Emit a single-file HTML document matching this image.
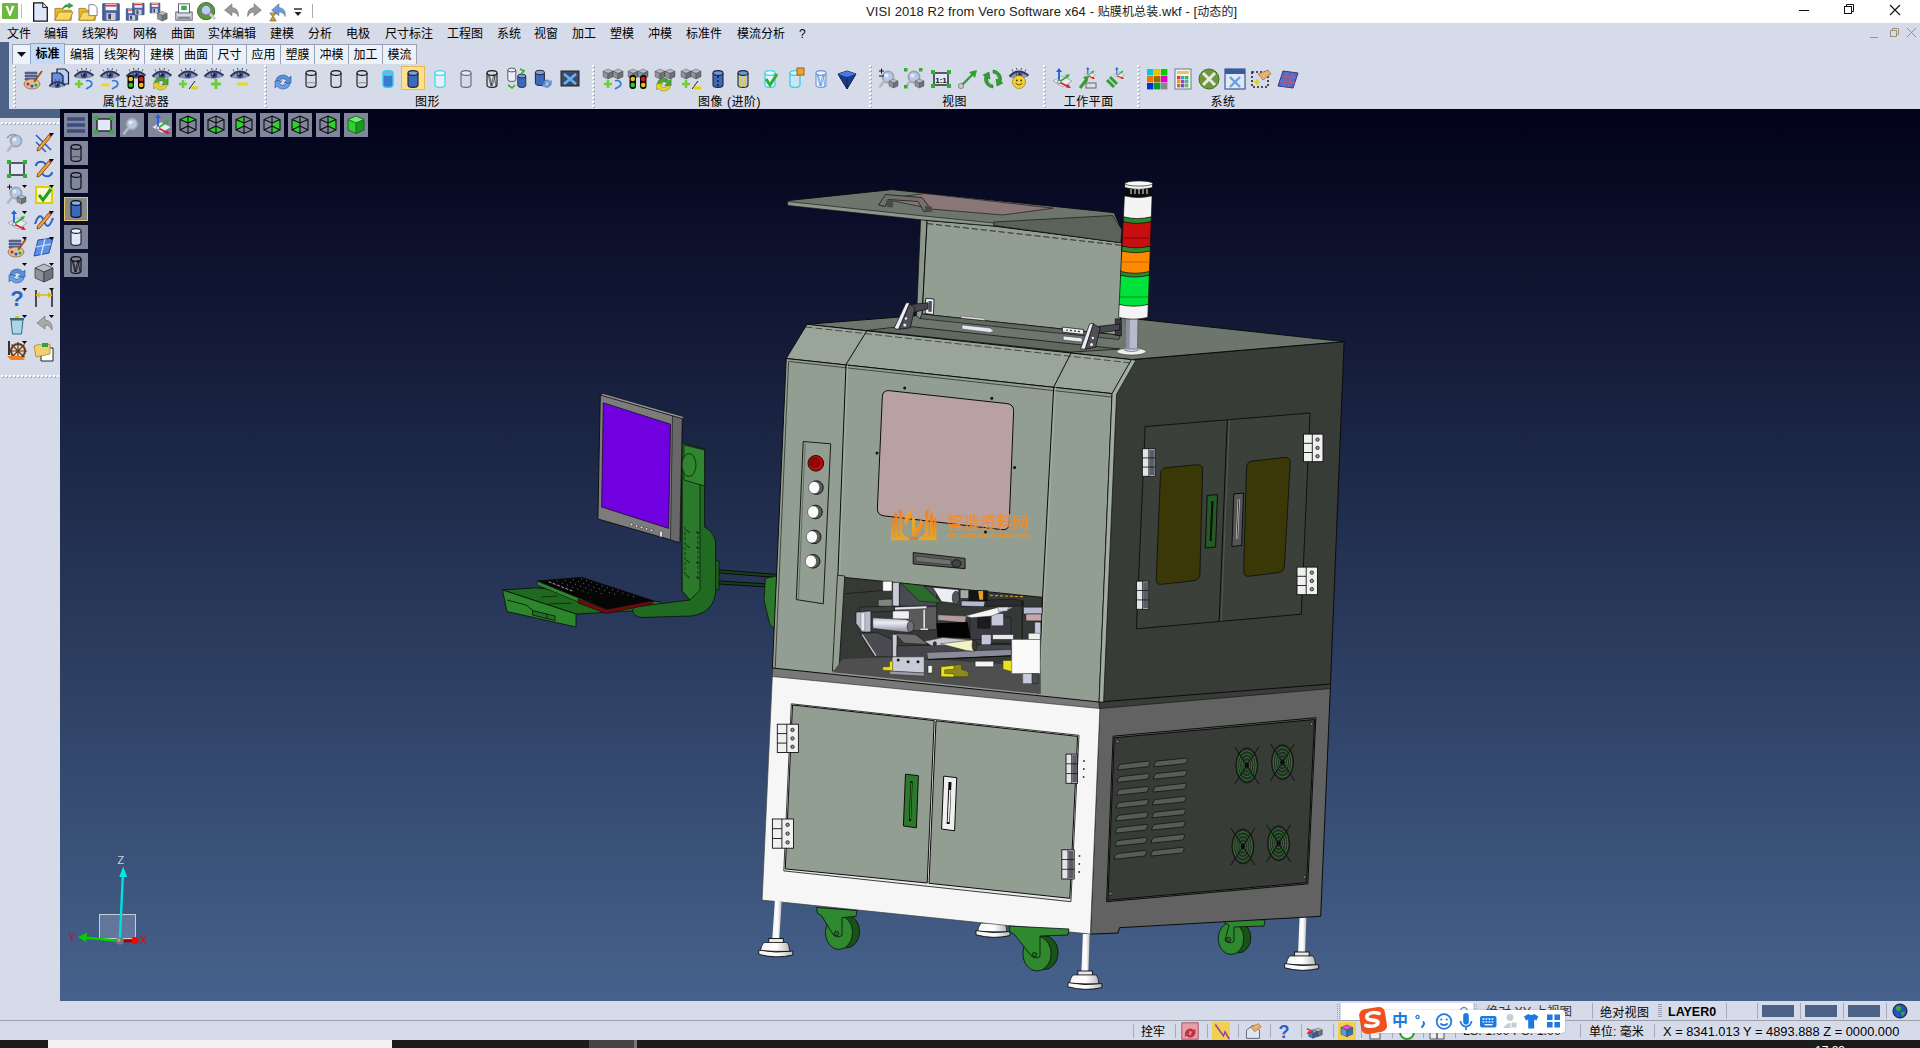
<!DOCTYPE html>
<html><head><meta charset="utf-8"><title>VISI</title>
<style>
*{box-sizing:border-box;margin:0;padding:0}
html,body{width:1920px;height:1048px;overflow:hidden;background:#d6dbe9}
body{position:relative;font-family:"Liberation Sans","Noto Sans CJK SC",sans-serif;font-size:12px;color:#000}
.abs{position:absolute}
svg{position:absolute;overflow:visible}
#title{left:0;top:0;width:1920px;height:23px;background:#fff}
#title .t{position:absolute;left:866px;top:4px;letter-spacing:.09px;font-size:13px;line-height:15px;white-space:nowrap;color:#222}
#title .t i{font-style:normal;font-size:12px}
#menu{left:0;top:23px;width:1920px;height:20px;background:#d6dbe9}
#menu span{position:absolute;top:4px;font-size:12px;white-space:nowrap;line-height:15px}
#blue{left:0;top:42px;width:1920px;height:76px;background:#4c6186}
#tb{left:9px;top:42px;width:1911px;height:67px;background:#d6dbe9}
.tab{position:absolute;top:44px;height:20px;border:1px solid #9aa3b5;border-bottom:none;background:#edf1f9;font-size:12px;line-height:21px;text-align:center;white-space:nowrap}
.tab.sel{top:43px;height:21px;background:#c4daf6;border-color:#8aa8d0;font-weight:bold;line-height:20px}
.grip{position:absolute;top:65px;width:3px;height:43px;background-image:repeating-linear-gradient(#fff 0 2px,transparent 2px 4px),repeating-linear-gradient(transparent 0 1px,#a9b0c2 1px 3px,transparent 3px 4px);background-size:2px 100%,2px 100%;background-position:0 0,1px 0;background-repeat:no-repeat}
.gl{position:absolute;top:95px;letter-spacing:.5px;font-size:12px;white-space:nowrap;transform:translateX(-50%);line-height:15px}
#left{left:0;top:118px;width:60px;height:883px;background:#d6dbe9}
.hgrip{position:absolute;left:1px;width:58px;height:3px;background-image:repeating-linear-gradient(90deg,#fff 0 2px,transparent 2px 4px),repeating-linear-gradient(90deg,transparent 0 1px,#a9b0c2 1px 3px,transparent 3px 4px);background-size:100% 2px,100% 2px;background-position:0 0,0 1px;background-repeat:no-repeat}
#vp{left:60px;top:109px;width:1860px;height:892px;background:linear-gradient(#02021a,#46628c);overflow:hidden}
#status{left:0;top:1001px;width:1920px;height:39px;background:#d6dbe9}
#status span{position:absolute;white-space:nowrap;font-size:12px;line-height:15px}
#task{left:0;top:1040px;width:1920px;height:8px;background:#1c1c1c}
.vb{position:absolute;width:24px;height:24px;background:#80869c}
.ic{position:absolute;width:22px;height:22px}

</style></head><body>
<div id="title" class="abs"><span class="t">VISI 2018 R2 from Vero Software x64 - <i>贴膜机总装</i>.wkf - [<i>动态的</i>]</span><svg style="left:2px;top:3px" width="16" height="16" viewBox="0 0 16 16"><rect width="16" height="16" rx="1" fill="#6cb840"/><path d="M3.500 3l4 10h1l4-10h-2.600l-2 6l-2-6z" fill="#fff"/></svg><div class="abs" style="left:21px;top:4px;width:1px;height:14px;background:#bbb"></div><svg style="left:30.0px;top:2.0px" width="20" height="20" viewBox="0 0 22 22"><path d="M4 1h10l5 5v15h-15z" fill="#dfe8fa" stroke="#111" stroke-width="1.4"/><path d="M14 1v5h5" fill="#dde" stroke="#111" stroke-width="1"/></svg><svg style="left:54.0px;top:2.0px" width="20" height="20" viewBox="0 0 22 22"><path d="M1 7h7l2 2h9v11h-18z" fill="#e8b830" stroke="#8a6a10" stroke-width=".7"/><path d="M1 20l4-9h16l-4 9z" fill="#f8d860" stroke="#8a6a10" stroke-width=".7"/><path d="M9 8q2-6 8-5l-1-2l5 3l-5 3l0-2q-4 0-7 3z" fill="#30b030" stroke="#1a6a1a" stroke-width=".5"/></svg><svg style="left:77.5px;top:2.0px" width="20" height="20" viewBox="0 0 22 22"><path d="M1 7h7l2 2h9v11h-18z" fill="#e8b830" stroke="#8a6a10" stroke-width=".7"/><path d="M1 20l4-9h16l-4 9z" fill="#f8d860" stroke="#8a6a10" stroke-width=".7"/><path d="M12 3h6l3 3v9h-9z" fill="#fff" stroke="#556" stroke-width=".8"/></svg><svg style="left:101.0px;top:2.0px" width="20" height="20" viewBox="0 0 22 22"><g transform="translate(0,0) scale(1)"><path d="M2 2h18v18h-18z" fill="#4a66a8" stroke="#2a3a6a"/><rect x="5" y="2" width="12" height="7" fill="#f0f0f0"/><rect x="5" y="3" width="12" height="2" fill="#e03030"/><rect x="6" y="12" width="10" height="8" fill="#c8ccd4"/><rect x="8" y="13" width="3" height="6" fill="#445"/></g></svg><svg style="left:125.0px;top:2.0px" width="20" height="20" viewBox="0 0 22 22"><g transform="translate(0,6) scale(0.7)"><path d="M2 2h18v18h-18z" fill="#4a66a8" stroke="#2a3a6a"/><rect x="5" y="2" width="12" height="7" fill="#f0f0f0"/><rect x="5" y="3" width="12" height="2" fill="#e03030"/><rect x="6" y="12" width="10" height="8" fill="#c8ccd4"/><rect x="8" y="13" width="3" height="6" fill="#445"/></g><g transform="translate(7,0) scale(0.7)"><path d="M2 2h18v18h-18z" fill="#4a66a8" stroke="#2a3a6a"/><rect x="5" y="2" width="12" height="7" fill="#f0f0f0"/><rect x="5" y="3" width="12" height="2" fill="#e03030"/><rect x="6" y="12" width="10" height="8" fill="#c8ccd4"/><rect x="8" y="13" width="3" height="6" fill="#445"/></g></svg><svg style="left:149.0px;top:2.0px" width="20" height="20" viewBox="0 0 22 22"><g transform="translate(0,0) scale(0.6)"><path d="M2 2h18v18h-18z" fill="#4a66a8" stroke="#2a3a6a"/><rect x="5" y="2" width="12" height="7" fill="#f0f0f0"/><rect x="5" y="3" width="12" height="2" fill="#e03030"/><rect x="6" y="12" width="10" height="8" fill="#c8ccd4"/><rect x="8" y="13" width="3" height="6" fill="#445"/></g><g transform="translate(8,9) scale(0.6)"><path d="M11 2l9 4l-9 4l-9-4z" fill="#b8bcc4" stroke="#333" stroke-width=".7"/><path d="M2 6l9 4v10l-9-4z" fill="#8e939c" stroke="#333" stroke-width=".7"/><path d="M20 6l-9 4v10l9-4z" fill="#6d727b" stroke="#333" stroke-width=".7"/></g></svg><svg style="left:174.0px;top:2.0px" width="20" height="20" viewBox="0 0 22 22"><rect x="2" y="11" width="18" height="9" fill="#d8dce4" stroke="#556"/><rect x="5" y="2" width="12" height="10" fill="#fff" stroke="#556"/><rect x="8" y="4" width="6" height="5" fill="#30b050"/><rect x="4" y="16" width="14" height="3" fill="#889"/></svg><svg style="left:197.0px;top:2.0px" width="20" height="20" viewBox="0 0 22 22"><circle cx="10" cy="10" r="9.500" fill="#5a9a3a" stroke="#3a6a2a"/><circle cx="10" cy="9" r="5.500" fill="#b8d0f0" stroke="#778" stroke-width="1.5"/><path d="M14 13l6 6" stroke="#ccc" stroke-width="3"/></svg><svg style="left:221.0px;top:2.0px" width="20" height="20" viewBox="0 0 22 22"><path d="M4 9l8-7v4q8 1 7 10q-2-5-7-5v4z" fill="#999" stroke="#666" stroke-width=".6"/></svg><svg style="left:244.5px;top:2.0px" width="20" height="20" viewBox="0 0 22 22"><path d="M18 9l-8-7v4q-8 1-7 10q2-5 7-5v4z" fill="#999" stroke="#666" stroke-width=".6"/></svg><svg style="left:268.0px;top:2.0px" width="20" height="20" viewBox="0 0 22 22"><path d="M4 9l8-7v4q8 1 7 10q-2-5-7-5v4z" fill="#6a9ae0" stroke="#666" stroke-width=".6"/><path d="M2 12h7l-3 4l3 5h-7l3-5z" fill="#c8a040" stroke="#6a4a10" stroke-width=".6"/></svg><svg style="left:293px;top:9px" width="10" height="8" viewBox="0 0 10 8"><path d="M1 0h8" stroke="#222" stroke-width="1.4"/><path d="M1.500 3h7l-3.500 4z" fill="#222"/></svg><div class="abs" style="left:312px;top:4px;width:1px;height:14px;background:#aaa"></div><svg style="left:1790px;top:-1px" width="130" height="22" viewBox="0 0 130 22"><path d="M9 11.500h10" stroke="#111" stroke-width="1"/><rect x="54.500" y="7.500" width="7" height="7" fill="none" stroke="#111"/><path d="M56.500 7.500v-2h7v7h-2" fill="none" stroke="#111"/><path d="M100 6l10 10M110 6l-10 10" stroke="#111" stroke-width="1.100"/></svg></div>
<div id="menu" class="abs"><span style="left:7px">文件</span><span style="left:44px">编辑</span><span style="left:82px">线架构</span><span style="left:133px">网格</span><span style="left:171px">曲面</span><span style="left:208px">实体编辑</span><span style="left:270px">建模</span><span style="left:308px">分析</span><span style="left:346px">电极</span><span style="left:385px">尺寸标注</span><span style="left:447px">工程图</span><span style="left:497px">系统</span><span style="left:534px">视窗</span><span style="left:572px">加工</span><span style="left:610px">塑模</span><span style="left:648px">冲模</span><span style="left:686px">标准件</span><span style="left:737px">模流分析</span><span style="left:799px">?</span><svg style="left:1869px;top:4px" width="50" height="12" viewBox="0 0 50 12"><path d="M1 10.500h8" stroke="#9a927e"/><rect x="21.500" y="3.500" width="6" height="6" fill="none" stroke="#9a927e"/><path d="M23.500 3.500v-2h6v6h-2" fill="none" stroke="#9a927e"/><path d="M38 1l9 9M47 1l-9 9" stroke="#9a927e"/></svg></div>
<div id="blue" class="abs"></div><div id="tb" class="abs"></div>
<div class="tab" style="left:12px;width:19px"><svg style="left:4px;top:7px" width="9" height="5" viewBox="0 0 9 5"><path d="M0 0h9l-4.500 5z" fill="#111"/></svg></div><div class="tab sel" style="left:30px;width:35px">标准</div><div class="tab" style="left:64px;width:36px">编辑</div><div class="tab" style="left:99px;width:46px">线架构</div><div class="tab" style="left:144px;width:36px">建模</div><div class="tab" style="left:179px;width:34px">曲面</div><div class="tab" style="left:212px;width:35px">尺寸</div><div class="tab" style="left:246px;width:35px">应用</div><div class="tab" style="left:280px;width:35px">塑膜</div><div class="tab" style="left:314px;width:35px">冲模</div><div class="tab" style="left:348px;width:35px">加工</div><div class="tab" style="left:382px;width:35px">模流</div>
<div class="grip" style="left:13px"></div><div class="grip" style="left:264px"></div><div class="grip" style="left:592px"></div><div class="grip" style="left:869px"></div><div class="grip" style="left:1043px"></div><div class="grip" style="left:1137px"></div><div class="gl" style="left:136px">属性/过滤器</div><div class="gl" style="left:427.5px">图形</div><div class="gl" style="left:729.5px">图像 (进阶)</div><div class="gl" style="left:954.5px">视图</div><div class="gl" style="left:1088.75px">工作平面</div><div class="gl" style="left:1223px">系统</div>
<svg style="left:21.5px;top:67.5px" width="22" height="22" viewBox="0 0 22 22"><path d="M3 4h12v2h-12zM3 7h12v2h-12zM3 10h12v2h-12z" fill="#5a6aa8" stroke="#334" stroke-width=".4"/><ellipse cx="10" cy="16" rx="8" ry="5" fill="#e0c098" stroke="#7a5a30" stroke-width=".7"/><circle cx="6" cy="16" r="1.6" fill="#e02020"/><circle cx="10" cy="18" r="1.6" fill="#2050e0"/><circle cx="14" cy="17" r="1.6" fill="#20b020"/><path d="M12 14l8-11" stroke="#a05010" stroke-width="1.8"/></svg><svg style="left:47.8px;top:67.5px" width="22" height="22" viewBox="0 0 22 22"><path d="M9 1h8l3.500 3.500v11.500h-11.500z" fill="#b8ccf4" stroke="#1a2238" stroke-width="1.200"/><path d="M4 5h8l3 3v9h-11z" fill="#6a8ee0" stroke="#1a2238" stroke-width="1.200"/><g transform="translate(0,11) scale(.85)"><path d="M2 9Q11 1 20 8Q12 12 2 9Z" fill="#8e9abb" stroke="#59648c" stroke-width=".5"/><path d="M1.500 8.500Q10 -1 20.500 7.500" fill="none" stroke="#2b3356" stroke-width="2"/><path d="M5 3.500l-1-2M9 2l-.5-2M13 2l.5-2M17 3.500l1-2" stroke="#2b3356" stroke-width=".8"/><circle cx="11" cy="7" r="3.300" fill="#3d4d80"/><circle cx="11" cy="7" r="1.400" fill="#10162e"/><circle cx="9.800" cy="6" r=".8" fill="#c8d4f0"/></g></svg><svg style="left:73.2px;top:67.5px" width="22" height="22" viewBox="0 0 22 22"><path d="M2 9Q11 1 20 8Q12 12 2 9Z" fill="#8e9abb" stroke="#59648c" stroke-width=".5"/><path d="M1.500 8.500Q10 -1 20.500 7.500" fill="none" stroke="#2b3356" stroke-width="2"/><path d="M5 3.500l-1-2M9 2l-.5-2M13 2l.5-2M17 3.500l1-2" stroke="#2b3356" stroke-width=".8"/><circle cx="11" cy="7" r="3.300" fill="#3d4d80"/><circle cx="11" cy="7" r="1.400" fill="#10162e"/><circle cx="9.800" cy="6" r=".8" fill="#c8d4f0"/><path d="M2 16h8M6 12v8" stroke="#6fd035" stroke-width="2.600"/><path d="M13 21l5-3q2-3-1-5q-2-1-4 0" fill="none" stroke="#3a78d8" stroke-width="1.700"/></svg><svg style="left:99.0px;top:67.5px" width="22" height="22" viewBox="0 0 22 22"><path d="M2 9Q11 1 20 8Q12 12 2 9Z" fill="#8e9abb" stroke="#59648c" stroke-width=".5"/><path d="M1.500 8.500Q10 -1 20.500 7.500" fill="none" stroke="#2b3356" stroke-width="2"/><path d="M5 3.500l-1-2M9 2l-.5-2M13 2l.5-2M17 3.500l1-2" stroke="#2b3356" stroke-width=".8"/><circle cx="11" cy="7" r="3.300" fill="#3d4d80"/><circle cx="11" cy="7" r="1.400" fill="#10162e"/><circle cx="9.800" cy="6" r=".8" fill="#c8d4f0"/><path d="M2 17h8" stroke="#e8dc10" stroke-width="2.600"/><path d="M13 21l5-3q2-3-1-5q-2-1-4 0" fill="none" stroke="#3a78d8" stroke-width="1.700"/></svg><svg style="left:124.8px;top:67.5px" width="22" height="22" viewBox="0 0 22 22"><path d="M2 9Q11 1 20 8Q12 12 2 9Z" fill="#8e9abb" stroke="#59648c" stroke-width=".5"/><path d="M1.500 8.500Q10 -1 20.500 7.500" fill="none" stroke="#2b3356" stroke-width="2"/><path d="M5 3.500l-1-2M9 2l-.5-2M13 2l.5-2M17 3.500l1-2" stroke="#2b3356" stroke-width=".8"/><circle cx="11" cy="7" r="3.300" fill="#3d4d80"/><circle cx="11" cy="7" r="1.400" fill="#10162e"/><circle cx="9.800" cy="6" r=".8" fill="#c8d4f0"/><rect x="2.500" y="7" width="6.500" height="14" rx="3" fill="#0a0a0a"/><rect x="13" y="7" width="6.500" height="14" rx="3" fill="#0a0a0a"/><circle cx="5.800" cy="11" r="2.300" fill="#f0c010"/><circle cx="5.800" cy="17" r="2.300" fill="#20d020"/><circle cx="16.200" cy="11" r="2.300" fill="#e81818"/><circle cx="16.200" cy="17" r="2.300" fill="#f0c010"/></svg><svg style="left:151.0px;top:67.5px" width="22" height="22" viewBox="0 0 22 22"><path d="M2 9Q11 1 20 8Q12 12 2 9Z" fill="#8e9abb" stroke="#59648c" stroke-width=".5"/><path d="M1.500 8.500Q10 -1 20.500 7.500" fill="none" stroke="#2b3356" stroke-width="2"/><path d="M5 3.500l-1-2M9 2l-.5-2M13 2l.5-2M17 3.500l1-2" stroke="#2b3356" stroke-width=".8"/><circle cx="11" cy="7" r="3.300" fill="#3d4d80"/><circle cx="11" cy="7" r="1.400" fill="#10162e"/><circle cx="9.800" cy="6" r=".8" fill="#c8d4f0"/><g transform="translate(0,3) scale(.9)"><path d="M4 13a7 6 0 0 1 13-3l2-2v7h-7l2.5-2.5a4 3.4 0 0 0-7 0z" fill="#4aa832" stroke="#2a6a1a" stroke-width=".6"/><path d="M18 13a7 6 0 0 1-13 3l-2 2v-7h7l-2.5 2.5a4 3.4 0 0 0 7 0z" fill="#e8d820" stroke="#8a7a10" stroke-width=".6" transform="translate(0,2)"/></g></svg><svg style="left:177.0px;top:67.5px" width="22" height="22" viewBox="0 0 22 22"><path d="M2 9Q11 1 20 8Q12 12 2 9Z" fill="#8e9abb" stroke="#59648c" stroke-width=".5"/><path d="M1.500 8.500Q10 -1 20.500 7.500" fill="none" stroke="#2b3356" stroke-width="2"/><path d="M5 3.500l-1-2M9 2l-.5-2M13 2l.5-2M17 3.500l1-2" stroke="#2b3356" stroke-width=".8"/><circle cx="11" cy="7" r="3.300" fill="#3d4d80"/><circle cx="11" cy="7" r="1.400" fill="#10162e"/><circle cx="9.800" cy="6" r=".8" fill="#c8d4f0"/><path d="M2 16h8M6 12v8" stroke="#6fd035" stroke-width="2.600"/><path d="M12 21l6-8" stroke="#222"/><path d="M14 20h7" stroke="#e6d000" stroke-width="3"/></svg><svg style="left:203.2px;top:67.5px" width="22" height="22" viewBox="0 0 22 22"><path d="M2 9Q11 1 20 8Q12 12 2 9Z" fill="#8e9abb" stroke="#59648c" stroke-width=".5"/><path d="M1.500 8.500Q10 -1 20.500 7.500" fill="none" stroke="#2b3356" stroke-width="2"/><path d="M5 3.500l-1-2M9 2l-.5-2M13 2l.5-2M17 3.500l1-2" stroke="#2b3356" stroke-width=".8"/><circle cx="11" cy="7" r="3.300" fill="#3d4d80"/><circle cx="11" cy="7" r="1.400" fill="#10162e"/><circle cx="9.800" cy="6" r=".8" fill="#c8d4f0"/><path d="M8 16h10M13 11v10" stroke="#6fd035" stroke-width="3"/></svg><svg style="left:229.0px;top:67.5px" width="22" height="22" viewBox="0 0 22 22"><path d="M2 9Q11 1 20 8Q12 12 2 9Z" fill="#8e9abb" stroke="#59648c" stroke-width=".5"/><path d="M1.500 8.500Q10 -1 20.500 7.500" fill="none" stroke="#2b3356" stroke-width="2"/><path d="M5 3.500l-1-2M9 2l-.5-2M13 2l.5-2M17 3.500l1-2" stroke="#2b3356" stroke-width=".8"/><circle cx="11" cy="7" r="3.300" fill="#3d4d80"/><circle cx="11" cy="7" r="1.400" fill="#10162e"/><circle cx="9.800" cy="6" r=".8" fill="#c8d4f0"/><path d="M8 16h11" stroke="#e8dc10" stroke-width="3"/></svg><div class="abs" style="left:401px;top:66px;width:24px;height:24px;background:#ffe08c;border:1px solid #e8b84a"></div><svg style="left:272.2px;top:67.5px" width="22" height="22" viewBox="0 0 22 22"><path d="M4 13a7 6 0 0 1 13-3l2-2v7h-7l2.5-2.5a4 3.4 0 0 0-7 0z" fill="#5a90d8" stroke="#2a50a0" stroke-width=".6"/><path d="M18 13a7 6 0 0 1-13 3l-2 2v-7h7l-2.5 2.5a4 3.4 0 0 0 7 0z" fill="#6aa0e4" stroke="#2a50a0" stroke-width=".6" transform="translate(0,2)"/></svg><svg style="left:299.5px;top:67.5px" width="22" height="22" viewBox="0 0 22 22"><path d="M6 5v12a5 2.4 0 0 0 10 0V5" fill="none" stroke="#161616" stroke-width="1.1"/><ellipse cx="11" cy="5" rx="5" ry="2.4" fill="none" stroke="#161616" stroke-width="1.1"/><path d="M6 17a5 2.4 0 0 1 10 0" fill="none" stroke="#777" stroke-width="0.8"/></svg><svg style="left:325.2px;top:67.5px" width="22" height="22" viewBox="0 0 22 22"><path d="M6 5v12a5 2.4 0 0 0 10 0V5" fill="none" stroke="#161616" stroke-width="1.1"/><ellipse cx="11" cy="5" rx="5" ry="2.4" fill="none" stroke="#161616" stroke-width="1.1"/></svg><svg style="left:351.0px;top:67.5px" width="22" height="22" viewBox="0 0 22 22"><path d="M6 5v12a5 2.4 0 0 0 10 0V5" fill="none" stroke="#161616" stroke-width="1.1"/><ellipse cx="11" cy="5" rx="5" ry="2.4" fill="none" stroke="#161616" stroke-width="1.1"/><path d="M6 17a5 2.4 0 0 1 10 0" fill="none" stroke="#777" stroke-width="0.8"/></svg><svg style="left:377.2px;top:67.5px" width="22" height="22" viewBox="0 0 22 22"><path d="M6 5v12a5 2.4 0 0 0 10 0V5" fill="#3a7ad0" stroke="#30d0e8" stroke-width="1.4"/><ellipse cx="11" cy="5" rx="5" ry="2.4" fill="#7ab0f0" stroke="#30d0e8" stroke-width="1.4"/></svg><svg style="left:402.0px;top:67.5px" width="22" height="22" viewBox="0 0 22 22"><path d="M6 5v12a5 2.4 0 0 0 10 0V5" fill="#3a6ab8" stroke="#223" stroke-width="1.1"/><ellipse cx="11" cy="5" rx="5" ry="2.4" fill="#7aa0e0" stroke="#223" stroke-width="1.1"/></svg><svg style="left:429.0px;top:67.5px" width="22" height="22" viewBox="0 0 22 22"><path d="M6 5v12a5 2.4 0 0 0 10 0V5" fill="#e8f0fa" stroke="#50d8e8" stroke-width="1.4"/><ellipse cx="11" cy="5" rx="5" ry="2.4" fill="#f4f8ff" stroke="#50d8e8" stroke-width="1.4"/></svg><svg style="left:455.2px;top:67.5px" width="22" height="22" viewBox="0 0 22 22"><path d="M6 5v12a5 2.4 0 0 0 10 0V5" fill="#d0daea" stroke="#667" stroke-width="1.1"/><ellipse cx="11" cy="5" rx="5" ry="2.4" fill="#e8eef8" stroke="#667" stroke-width="1.1"/></svg><svg style="left:481.0px;top:67.5px" width="22" height="22" viewBox="0 0 22 22"><path d="M6 5v12a5 2.4 0 0 0 10 0V5" fill="none" stroke="#161616" stroke-width="1.1"/><ellipse cx="11" cy="5" rx="5" ry="2.4" fill="none" stroke="#161616" stroke-width="1.1"/><path d="M7 6l3 12l3-12l2 12M15 6l-4 12l-3-12" fill="none" stroke="#333" stroke-width=".7"/></svg><svg style="left:506.0px;top:67.5px" width="22" height="22" viewBox="0 0 22 22"><g transform="translate(-3,-2) scale(.8)"><path d="M6 5v12a5 2.4 0 0 0 10 0V5" fill="#e8eef8" stroke="#445" stroke-width="1.1"/><ellipse cx="11" cy="5" rx="5" ry="2.4" fill="#e8eef8" stroke="#445" stroke-width="1.1"/></g><g transform="translate(7,4) scale(.8)"><path d="M6 5v12a5 2.4 0 0 0 10 0V5" fill="#3a6ab8" stroke="#223" stroke-width="1.1"/><ellipse cx="11" cy="5" rx="5" ry="2.4" fill="#7aa0e0" stroke="#223" stroke-width="1.1"/></g><path d="M2 17l4 3l3-3M14 1l4 2l-3 3" fill="none" stroke="#30b030" stroke-width="1.600"/></svg><svg style="left:533.2px;top:67.5px" width="22" height="22" viewBox="0 0 22 22"><g transform="translate(-3,0) scale(.9)"><path d="M6 5v12a5 2.4 0 0 0 10 0V5" fill="#3a6ab8" stroke="#223" stroke-width="1.1"/><ellipse cx="11" cy="5" rx="5" ry="2.4" fill="#7aa0e0" stroke="#223" stroke-width="1.1"/></g><g transform="translate(8,8) scale(.55)"><path d="M4 13a7 6 0 0 1 13-3l2-2v7h-7l2.5-2.5a4 3.4 0 0 0-7 0z" fill="#6aa0e8" stroke="#2a50a0" stroke-width=".6"/><path d="M18 13a7 6 0 0 1-13 3l-2 2v-7h7l-2.5 2.5a4 3.4 0 0 0 7 0z" fill="#6aa0e8" stroke="#2a50a0" stroke-width=".6" transform="translate(0,2)"/></g></svg><svg style="left:559.0px;top:67.5px" width="22" height="22" viewBox="0 0 22 22"><rect x="2" y="3" width="18" height="15" fill="#3a4a6a" stroke="#222"/><path d="M5 6l12 10M17 6L5 16" stroke="#6ab0f0" stroke-width="2.6"/></svg><svg style="left:601.5px;top:67.5px" width="22" height="22" viewBox="0 0 22 22"><g transform="translate(0,0) scale(0.55)"><path d="M11 2l9 4l-9 4l-9-4z" fill="#b8bcc4" stroke="#333" stroke-width=".7"/><path d="M2 6l9 4v10l-9-4z" fill="#8e939c" stroke="#333" stroke-width=".7"/><path d="M20 6l-9 4v10l9-4z" fill="#6d727b" stroke="#333" stroke-width=".7"/></g><g transform="translate(10,0) scale(0.55)"><path d="M11 2l9 4l-9 4l-9-4z" fill="#b8bcc4" stroke="#333" stroke-width=".7"/><path d="M2 6l9 4v10l-9-4z" fill="#8e939c" stroke="#333" stroke-width=".7"/><path d="M20 6l-9 4v10l9-4z" fill="#6d727b" stroke="#333" stroke-width=".7"/></g><path d="M2 16h8M6 12v8" stroke="#6fd035" stroke-width="2.600"/><path d="M13 21l5-3q2-3-1-5q-2-1-4 0" fill="none" stroke="#3a78d8" stroke-width="1.700"/></svg><svg style="left:627.2px;top:67.5px" width="22" height="22" viewBox="0 0 22 22"><g transform="translate(0,0) scale(0.55)"><path d="M11 2l9 4l-9 4l-9-4z" fill="#b8bcc4" stroke="#333" stroke-width=".7"/><path d="M2 6l9 4v10l-9-4z" fill="#8e939c" stroke="#333" stroke-width=".7"/><path d="M20 6l-9 4v10l9-4z" fill="#6d727b" stroke="#333" stroke-width=".7"/></g><g transform="translate(10,0) scale(0.55)"><path d="M11 2l9 4l-9 4l-9-4z" fill="#b8bcc4" stroke="#333" stroke-width=".7"/><path d="M2 6l9 4v10l-9-4z" fill="#8e939c" stroke="#333" stroke-width=".7"/><path d="M20 6l-9 4v10l9-4z" fill="#6d727b" stroke="#333" stroke-width=".7"/></g><rect x="2.500" y="7" width="6.500" height="14" rx="3" fill="#0a0a0a"/><rect x="13" y="7" width="6.500" height="14" rx="3" fill="#0a0a0a"/><circle cx="5.800" cy="11" r="2.300" fill="#f0c010"/><circle cx="5.800" cy="17" r="2.300" fill="#20d020"/><circle cx="16.200" cy="11" r="2.300" fill="#e81818"/><circle cx="16.200" cy="17" r="2.300" fill="#f0c010"/></svg><svg style="left:653.5px;top:67.5px" width="22" height="22" viewBox="0 0 22 22"><g transform="translate(0,0) scale(0.55)"><path d="M11 2l9 4l-9 4l-9-4z" fill="#b8bcc4" stroke="#333" stroke-width=".7"/><path d="M2 6l9 4v10l-9-4z" fill="#8e939c" stroke="#333" stroke-width=".7"/><path d="M20 6l-9 4v10l9-4z" fill="#6d727b" stroke="#333" stroke-width=".7"/></g><g transform="translate(10,0) scale(0.55)"><path d="M11 2l9 4l-9 4l-9-4z" fill="#b8bcc4" stroke="#333" stroke-width=".7"/><path d="M2 6l9 4v10l-9-4z" fill="#8e939c" stroke="#333" stroke-width=".7"/><path d="M20 6l-9 4v10l9-4z" fill="#6d727b" stroke="#333" stroke-width=".7"/></g><g transform="translate(0,4) scale(.9)"><path d="M4 13a7 6 0 0 1 13-3l2-2v7h-7l2.5-2.5a4 3.4 0 0 0-7 0z" fill="#4aa832" stroke="#2a6a1a" stroke-width=".6"/><path d="M18 13a7 6 0 0 1-13 3l-2 2v-7h7l-2.5 2.5a4 3.4 0 0 0 7 0z" fill="#e8d820" stroke="#8a7a10" stroke-width=".6" transform="translate(0,2)"/></g></svg><svg style="left:679.5px;top:67.5px" width="22" height="22" viewBox="0 0 22 22"><g transform="translate(0,0) scale(0.55)"><path d="M11 2l9 4l-9 4l-9-4z" fill="#b8bcc4" stroke="#333" stroke-width=".7"/><path d="M2 6l9 4v10l-9-4z" fill="#8e939c" stroke="#333" stroke-width=".7"/><path d="M20 6l-9 4v10l9-4z" fill="#6d727b" stroke="#333" stroke-width=".7"/></g><g transform="translate(10,0) scale(0.55)"><path d="M11 2l9 4l-9 4l-9-4z" fill="#b8bcc4" stroke="#333" stroke-width=".7"/><path d="M2 6l9 4v10l-9-4z" fill="#8e939c" stroke="#333" stroke-width=".7"/><path d="M20 6l-9 4v10l9-4z" fill="#6d727b" stroke="#333" stroke-width=".7"/></g><path d="M2 16h8M6 12v8" stroke="#6fd035" stroke-width="2.600"/><path d="M12 21l6-8" stroke="#222"/><path d="M14 20h7" stroke="#e6d000" stroke-width="3"/></svg><svg style="left:706.5px;top:67.5px" width="22" height="22" viewBox="0 0 22 22"><path d="M6 5v12a5 2.4 0 0 0 10 0V5" fill="#3a6ab8" stroke="#223" stroke-width="1.1"/><ellipse cx="11" cy="5" rx="5" ry="2.4" fill="#6a98e0" stroke="#223" stroke-width="1.1"/><path d="M11 8v10" stroke="#113" stroke-width="1.400" stroke-dasharray="2 2"/></svg><svg style="left:732.2px;top:67.5px" width="22" height="22" viewBox="0 0 22 22"><path d="M6 5v12a5 2.4 0 0 0 10 0V5" fill="#b8c4dc" stroke="#223" stroke-width="1.1"/><ellipse cx="11" cy="5" rx="5" ry="2.4" fill="#6a98e0" stroke="#223" stroke-width="1.1"/><path d="M9 8v11M13 8v11" stroke="#e0d020" stroke-width="1.600"/></svg><svg style="left:759.0px;top:67.5px" width="22" height="22" viewBox="0 0 22 22"><path d="M6 5v12a5 2.4 0 0 0 10 0V5" fill="#e8f4fa" stroke="#40d8e8" stroke-width="1.4"/><ellipse cx="11" cy="5" rx="5" ry="2.4" fill="#f4f8ff" stroke="#40d8e8" stroke-width="1.4"/><path d="M7 11l4 6l7-11" fill="none" stroke="#30b030" stroke-width="3"/></svg><svg style="left:783.5px;top:67.5px" width="22" height="22" viewBox="0 0 22 22"><path d="M6 5v12a5 2.4 0 0 0 10 0V5" fill="#cfe4f4" stroke="#40d0e8" stroke-width="1.4"/><ellipse cx="11" cy="5" rx="5" ry="2.4" fill="#e8f4fa" stroke="#40d0e8" stroke-width="1.4"/><rect x="13" y="0" width="7" height="7" fill="#f0a030" stroke="#a06010"/></svg><svg style="left:810.2px;top:67.5px" width="22" height="22" viewBox="0 0 22 22"><path d="M6 5v12a5 2.4 0 0 0 10 0V5" fill="#e8f0fa" stroke="#6a98d8" stroke-width="1.1"/><ellipse cx="11" cy="5" rx="5" ry="2.4" fill="#e8f0fa" stroke="#6a98d8" stroke-width="1.1"/><path d="M7 6l3 12l3-12l2 12M15 6l-4 12l-3-12" fill="none" stroke="#6a98d8" stroke-width=".8"/></svg><svg style="left:835.8px;top:67.5px" width="22" height="22" viewBox="0 0 22 22"><path d="M2 6l9-3l9 3l-9 15z" fill="#1a3a8a" stroke="#0a1a4a"/><path d="M2 6l9 3l9-3l-9-3z" fill="#4a7ae0"/><path d="M11 9v12" stroke="#0a1a4a" stroke-width=".6"/></svg><svg style="left:877.8px;top:67.5px" width="22" height="22" viewBox="0 0 22 22"><circle cx="10" cy="9" r="5.6" fill="#a9c4e8" fill-opacity=".75" stroke="#9aa2b0" stroke-width="1.6"/><circle cx="8.500" cy="7.500" r="2" fill="#fff" fill-opacity=".6"/><path d="M6 13.500l-4 5" stroke="#b4b8c0" stroke-width="2.800" stroke-linecap="round"/><g transform="translate(10,10) scale(0.5)"><path d="M11 2l9 4l-9 4l-9-4z" fill="#b8bcc4" stroke="#333" stroke-width=".7"/><path d="M2 6l9 4v10l-9-4z" fill="#8e939c" stroke="#333" stroke-width=".7"/><path d="M20 6l-9 4v10l9-4z" fill="#6d727b" stroke="#333" stroke-width=".7"/></g><path d="M1 3h5M3.500 .5v5M1 8h5" stroke="#111" stroke-width="1"/></svg><svg style="left:904.0px;top:67.5px" width="22" height="22" viewBox="0 0 22 22"><circle cx="10" cy="9" r="5.6" fill="#a9c4e8" fill-opacity=".75" stroke="#9aa2b0" stroke-width="1.6"/><circle cx="8.500" cy="7.500" r="2" fill="#fff" fill-opacity=".6"/><path d="M6 13.500l-4 5" stroke="#b4b8c0" stroke-width="2.800" stroke-linecap="round"/><g transform="translate(10,10) scale(0.5)"><path d="M11 2l9 4l-9 4l-9-4z" fill="#b8bcc4" stroke="#333" stroke-width=".7"/><path d="M2 6l9 4v10l-9-4z" fill="#8e939c" stroke="#333" stroke-width=".7"/><path d="M20 6l-9 4v10l9-4z" fill="#6d727b" stroke="#333" stroke-width=".7"/></g><rect x="0" y="0" width="3.500" height="3.500" fill="#30b030"/><rect x="15" y="0" width="3.500" height="3.500" fill="#30b030"/><rect x="0" y="17" width="3.500" height="3.500" fill="#30b030"/></svg><svg style="left:930.2px;top:67.5px" width="22" height="22" viewBox="0 0 22 22"><rect x="4" y="5" width="14" height="12" fill="#dfe8f8" stroke="#222" stroke-width="1.4"/><rect x="1" y="2" width="4" height="4" fill="#30b030"/><rect x="17" y="2" width="4" height="4" fill="#30b030"/><rect x="1" y="16" width="4" height="4" fill="#30b030"/><rect x="17" y="16" width="4" height="4" fill="#30b030"/><text x="11" y="14.500" font-size="8" font-weight="bold" text-anchor="middle" fill="#112" font-family="Liberation Sans,sans-serif">1:1</text></svg><svg style="left:956.5px;top:67.5px" width="22" height="22" viewBox="0 0 22 22"><path d="M4 18L17 5" stroke="#30a030" stroke-width="2.4"/><path d="M20 2l-8 2l6 6z" fill="#30a030"/><circle cx="4" cy="18" r="2.6" fill="#ccc" stroke="#555" stroke-width=".6"/></svg><svg style="left:982.0px;top:67.5px" width="22" height="22" viewBox="0 0 22 22"><path d="M11 2a9 9 0 0 1 8 12l2 1l-6 3l-1-7l2 1a5.500 5.500 0 0 0-5-7z" fill="#30a030" stroke="#1a6a1a" stroke-width=".5"/><path d="M11 20a9 9 0 0 1-8-12l-2-1l6-3l1 7l-2-1a5.500 5.500 0 0 0 5 7z" fill="#30a030" stroke="#1a6a1a" stroke-width=".5"/></svg><svg style="left:1008.2px;top:67.5px" width="22" height="22" viewBox="0 0 22 22"><path d="M2 9Q11 1 20 8Q12 12 2 9Z" fill="#8e9abb" stroke="#59648c" stroke-width=".5"/><path d="M1.500 8.500Q10 -1 20.500 7.500" fill="none" stroke="#2b3356" stroke-width="2"/><path d="M5 3.500l-1-2M9 2l-.5-2M13 2l.5-2M17 3.500l1-2" stroke="#2b3356" stroke-width=".8"/><circle cx="11" cy="7" r="3.300" fill="#3d4d80"/><circle cx="11" cy="7" r="1.400" fill="#10162e"/><circle cx="9.800" cy="6" r=".8" fill="#c8d4f0"/><circle cx="11" cy="14" r="6.5" fill="#f8d030" stroke="#a07810" stroke-width=".7"/><circle cx="8.800" cy="12.500" r=".9" fill="#333"/><circle cx="13.200" cy="12.500" r=".9" fill="#333"/><path d="M7.500 15.500q3.500 3 7 0" fill="none" stroke="#333" stroke-width=".8"/></svg><svg style="left:1051.0px;top:67.5px" width="22" height="22" viewBox="0 0 22 22"><path d="M2 13l9-5l10 5l-9 6z" fill="#e6ecf6" stroke="#889" stroke-width=".6"/><path d="M8 14V2" stroke="#2060e0" stroke-width="1.8"/><path d="M8 0l-3 4h6z" fill="#2060e0"/><path d="M8 14l9-6" stroke="#30b030" stroke-width="1.8"/><path d="M19 6l-5 1l3 3z" fill="#30b030"/><path d="M8 14l10 5" stroke="#e02020" stroke-width="1.8"/><path d="M20 20l-5-.5l2-3.5z" fill="#e02020"/><circle cx="8" cy="14" r="1.8" fill="#ddd" stroke="#555" stroke-width=".5"/></svg><svg style="left:1077.2px;top:67.5px" width="22" height="22" viewBox="0 0 22 22"><g transform="translate(6,-1) scale(.6)"><path d="M2 13l9-5l10 5l-9 6z" fill="#e6ecf6" stroke="#889" stroke-width=".6"/><path d="M8 14V2" stroke="#2060e0" stroke-width="1.8"/><path d="M8 0l-3 4h6z" fill="#2060e0"/><path d="M8 14l9-6" stroke="#30b030" stroke-width="1.8"/><path d="M19 6l-5 1l3 3z" fill="#30b030"/><path d="M8 14l10 5" stroke="#e02020" stroke-width="1.8"/><path d="M20 20l-5-.5l2-3.5z" fill="#e02020"/><circle cx="8" cy="14" r="1.8" fill="#ddd" stroke="#555" stroke-width=".5"/></g><path d="M3 20l7-9" stroke="#30a030" stroke-width="3"/><path d="M12 8l-6 1l4 5z" fill="#30a030"/><rect x="9" y="15" width="10" height="5" fill="#ddd" stroke="#666"/></svg><svg style="left:1103.5px;top:67.5px" width="22" height="22" viewBox="0 0 22 22"><g transform="translate(8,-1) scale(.6)"><path d="M2 13l9-5l10 5l-9 6z" fill="#e6ecf6" stroke="#889" stroke-width=".6"/><path d="M8 14V2" stroke="#2060e0" stroke-width="1.8"/><path d="M8 0l-3 4h6z" fill="#2060e0"/><path d="M8 14l9-6" stroke="#30b030" stroke-width="1.8"/><path d="M19 6l-5 1l3 3z" fill="#30b030"/><path d="M8 14l10 5" stroke="#e02020" stroke-width="1.8"/><path d="M20 20l-5-.5l2-3.5z" fill="#e02020"/><circle cx="8" cy="14" r="1.8" fill="#ddd" stroke="#555" stroke-width=".5"/></g><path d="M3 12l7 7M6 9l7 7" stroke="#30a030" stroke-width="3"/></svg><svg style="left:1145.8px;top:67.5px" width="22" height="22" viewBox="0 0 22 22"><rect x="1" y="1" width="6.4" height="6.4" fill="#00c8e8"/><rect x="8" y="1" width="6.4" height="6.4" fill="#e8c000"/><rect x="15" y="1" width="6.4" height="6.4" fill="#00d000"/><rect x="1" y="8" width="6.4" height="6.4" fill="#e87800"/><rect x="8" y="8" width="6.4" height="6.4" fill="#a06800"/><rect x="15" y="8" width="6.4" height="6.4" fill="#e800c8"/><rect x="1" y="15" width="6.4" height="6.4" fill="#0030d8"/><rect x="8" y="15" width="6.4" height="6.4" fill="#00a030"/><rect x="15" y="15" width="6.4" height="6.4" fill="#888"/></svg><svg style="left:1172.0px;top:67.5px" width="22" height="22" viewBox="0 0 22 22"><rect x="3" y="1" width="16" height="20" fill="#f4f6fa" stroke="#6a7890" stroke-width="1"/><rect x="5" y="3" width="12" height="3" fill="#ffc040"/><rect x="5" y="8" width="3.4" height="3.4" fill="#e03030"/><rect x="9" y="8" width="3.4" height="3.4" fill="#30a0e0"/><rect x="13" y="8" width="3.4" height="3.4" fill="#30c030"/><rect x="5" y="12" width="3.4" height="3.4" fill="#e0a020"/><rect x="9" y="12" width="3.4" height="3.4" fill="#a040c0"/><rect x="13" y="12" width="3.4" height="3.4" fill="#30c0a0"/><rect x="5" y="16" width="3.4" height="3.4" fill="#e06030"/><rect x="9" y="16" width="3.4" height="3.4" fill="#4060e0"/><rect x="13" y="16" width="3.4" height="3.4" fill="#80c020"/></svg><svg style="left:1198.2px;top:67.5px" width="22" height="22" viewBox="0 0 22 22"><circle cx="11" cy="11" r="10" fill="#6a9a3a" stroke="#4a6a2a"/><path d="M5 5l12 12M17 5L5 17" stroke="#e8e8e8" stroke-width="3"/></svg><svg style="left:1224.0px;top:67.5px" width="22" height="22" viewBox="0 0 22 22"><rect x="1" y="1" width="20" height="20" fill="#dfe8f4" stroke="#3a5a9a" stroke-width="1.2"/><rect x="1" y="1" width="20" height="5" fill="#3a5a9a"/><path d="M6 9l10 10M16 9L6 19" stroke="#6aa0e0" stroke-width="2.4"/></svg><svg style="left:1250.2px;top:67.5px" width="22" height="22" viewBox="0 0 22 22"><rect x="2" y="4" width="16" height="15" fill="none" stroke="#223" stroke-width="1.6" stroke-dasharray="2 2"/><path d="M8 6l10-4l3 4l-8 6z" fill="#e8b070" stroke="#8a5a20" stroke-width=".6"/><path d="M4 14h6M7 11v6" stroke="#e8d020" stroke-width="2"/></svg><svg style="left:1276.5px;top:67.5px" width="22" height="22" viewBox="0 0 22 22"><path d="M6 3l15 2l-5 15l-15-2z" fill="#4a70d8" stroke="#2a3a8a"/><path d="M11 4l-5 15M16 4.5l-5 15M4.500 8l15 2M3 13l15 2" stroke="#e05050" stroke-width="1"/></svg>
<div id="left" class="abs"><div class="hgrip" style="top:4px"></div><div class="hgrip" style="top:257px"></div><svg style="left:6.2px;top:14.0px" width="22" height="22" viewBox="0 0 22 22"><circle cx="10" cy="9" r="5.6" fill="#a9c4e8" fill-opacity=".75" stroke="#9aa2b0" stroke-width="1.6"/><circle cx="8.500" cy="7.500" r="2" fill="#fff" fill-opacity=".6"/><path d="M6 13.500l-4 5" stroke="#b4b8c0" stroke-width="2.800" stroke-linecap="round"/><path d="M1 6q4-5 9-3" fill="none" stroke="#99a" stroke-width="1.500"/></svg><svg style="left:32.5px;top:14.0px" width="22" height="22" viewBox="0 0 22 22"><path d="M3 3l15 15M3 10l10 10" stroke="#2a60c8" stroke-width="1.600"/><path d="M4 19l3-1l11-13l-2.5-2l-11 13z" fill="#e8a040" stroke="#6a4010" stroke-width=".8"/><path d="M15.5 3l2.5 2l1.5-2l-2.5-2z" fill="#d03030"/><path d="M16 1h5l-2.5 3z" fill="#000"/></svg><svg style="left:6.2px;top:39.7px" width="22" height="22" viewBox="0 0 22 22"><rect x="4" y="5" width="14" height="12" fill="#dfe8f8" stroke="#222" stroke-width="1.4"/><rect x="1" y="2" width="4" height="4" fill="#30b030"/><rect x="17" y="2" width="4" height="4" fill="#30b030"/><rect x="1" y="16" width="4" height="4" fill="#30b030"/><rect x="17" y="16" width="4" height="4" fill="#30b030"/></svg><svg style="left:32.5px;top:39.7px" width="22" height="22" viewBox="0 0 22 22"><path d="M3 8a5 4 0 1 1 8 3a5 4 0 1 0 8 3" fill="none" stroke="#2a60c8" stroke-width="2"/><path d="M4 19l3-1l11-13l-2.5-2l-11 13z" fill="#e8a040" stroke="#6a4010" stroke-width=".8"/><path d="M15.5 3l2.5 2l1.5-2l-2.5-2z" fill="#d03030"/><path d="M16 1h5l-2.5 3z" fill="#000"/></svg><svg style="left:6.2px;top:66.0px" width="22" height="22" viewBox="0 0 22 22"><circle cx="10" cy="9" r="5.6" fill="#a9c4e8" fill-opacity=".75" stroke="#9aa2b0" stroke-width="1.6"/><circle cx="8.500" cy="7.500" r="2" fill="#fff" fill-opacity=".6"/><path d="M6 13.500l-4 5" stroke="#b4b8c0" stroke-width="2.800" stroke-linecap="round"/><g transform="translate(10,10) scale(0.5)"><path d="M11 2l9 4l-9 4l-9-4z" fill="#b8bcc4" stroke="#333" stroke-width=".7"/><path d="M2 6l9 4v10l-9-4z" fill="#8e939c" stroke="#333" stroke-width=".7"/><path d="M20 6l-9 4v10l9-4z" fill="#6d727b" stroke="#333" stroke-width=".7"/></g><path d="M1 3h5M3.500 .5v5" stroke="#111"/><path d="M16 1h5l-2.5 3z" fill="#000"/></svg><svg style="left:32.5px;top:66.0px" width="22" height="22" viewBox="0 0 22 22"><rect x="3" y="3" width="16" height="16" fill="#f8f8d0" stroke="#e0d000" stroke-width="2"/><path d="M6 11l4 5l8-11" fill="none" stroke="#20a020" stroke-width="3"/><path d="M16 1h5l-2.5 3z" fill="#000"/></svg><svg style="left:6.2px;top:91.8px" width="22" height="22" viewBox="0 0 22 22"><path d="M2 13l9-5l10 5l-9 6z" fill="#e6ecf6" stroke="#889" stroke-width=".6"/><path d="M8 14V2" stroke="#2060e0" stroke-width="1.8"/><path d="M8 0l-3 4h6z" fill="#2060e0"/><path d="M8 14l9-6" stroke="#30b030" stroke-width="1.8"/><path d="M19 6l-5 1l3 3z" fill="#30b030"/><path d="M8 14l10 5" stroke="#e02020" stroke-width="1.8"/><path d="M20 20l-5-.5l2-3.5z" fill="#e02020"/><circle cx="8" cy="14" r="1.8" fill="#ddd" stroke="#555" stroke-width=".5"/><path d="M16 1h5l-2.5 3z" fill="#000"/></svg><svg style="left:32.5px;top:91.8px" width="22" height="22" viewBox="0 0 22 22"><path d="M2 14q5-14 9-3t9-3" fill="none" stroke="#2a60c8" stroke-width="2"/><path d="M4 19l3-1l11-13l-2.5-2l-11 13z" fill="#e8a040" stroke="#6a4010" stroke-width=".8"/><path d="M15.5 3l2.5 2l1.5-2l-2.5-2z" fill="#d03030"/><path d="M16 1h5l-2.5 3z" fill="#000"/></svg><svg style="left:6.2px;top:118.0px" width="22" height="22" viewBox="0 0 22 22"><path d="M3 4h12v2h-12zM3 7h12v2h-12zM3 10h12v2h-12z" fill="#5a6aa8" stroke="#334" stroke-width=".4"/><ellipse cx="10" cy="16" rx="8" ry="5" fill="#e0c098" stroke="#7a5a30" stroke-width=".7"/><circle cx="6" cy="16" r="1.6" fill="#e02020"/><circle cx="10" cy="18" r="1.6" fill="#2050e0"/><circle cx="14" cy="17" r="1.6" fill="#20b020"/><path d="M12 14l8-11" stroke="#a05010" stroke-width="1.8"/><path d="M16 1h5l-2.5 3z" fill="#000"/></svg><svg style="left:32.5px;top:118.0px" width="22" height="22" viewBox="0 0 22 22"><path d="M5 4l15-2l-4 15l-15 3z" fill="#5a90e8" stroke="#2a4aa8"/><path d="M12 3l-4 16M3 11l15-3" stroke="#d8e4fa" stroke-width="1.2"/><path d="M16 1h5l-2.5 3z" fill="#000"/></svg><svg style="left:6.2px;top:143.7px" width="22" height="22" viewBox="0 0 22 22"><path d="M4 13a7 6 0 0 1 13-3l2-2v7h-7l2.5-2.5a4 3.4 0 0 0-7 0z" fill="#5a90d8" stroke="#2a50a0" stroke-width=".6"/><path d="M18 13a7 6 0 0 1-13 3l-2 2v-7h7l-2.5 2.5a4 3.4 0 0 0 7 0z" fill="#6aa0e4" stroke="#2a50a0" stroke-width=".6" transform="translate(0,2)"/><path d="M16 1h5l-2.5 3z" fill="#000"/></svg><svg style="left:32.5px;top:143.7px" width="22" height="22" viewBox="0 0 22 22"><g transform="translate(0,0) scale(1.0)"><path d="M11 2l9 4l-9 4l-9-4z" fill="#b8bcc4" stroke="#333" stroke-width=".7"/><path d="M2 6l9 4v10l-9-4z" fill="#8e939c" stroke="#333" stroke-width=".7"/><path d="M20 6l-9 4v10l9-4z" fill="#6d727b" stroke="#333" stroke-width=".7"/></g><path d="M16 1h5l-2.5 3z" fill="#000"/></svg><svg style="left:6.2px;top:169.4px" width="22" height="22" viewBox="0 0 22 22"><text x="11" y="19" font-size="22" font-weight="bold" text-anchor="middle" fill="#2a60c8" font-family="Liberation Sans,sans-serif">?</text><path d="M16 1h5l-2.5 3z" fill="#000"/></svg><svg style="left:32.5px;top:169.4px" width="22" height="22" viewBox="0 0 22 22"><path d="M3 3v17M19 3v17" stroke="#111" stroke-width="1.4"/><path d="M3 8h16" stroke="#d8c000" stroke-width="1.6"/><path d="M3 8l4-3v6zM19 8l-4-3v6z" fill="#d8c000"/><path d="M16 1h5l-2.5 3z" fill="#000"/></svg><svg style="left:6.2px;top:195.8px" width="22" height="22" viewBox="0 0 22 22"><path d="M5 6h12l-1.500 14h-9z" fill="#a8d8e8" stroke="#3a6a7a"/><path d="M4 5h14" stroke="#3a6a7a" stroke-width="2"/><path d="M9 3h4" stroke="#e0c020" stroke-width="2"/><path d="M16 1h5l-2.5 3z" fill="#000"/></svg><svg style="left:32.5px;top:195.8px" width="22" height="22" viewBox="0 0 22 22"><path d="M4 9l8-7v4q8 1 7 10q-2-5-7-5v4z" fill="#aaa" stroke="#666" stroke-width=".6"/><path d="M16 1h5l-2.5 3z" fill="#000"/></svg><svg style="left:6.2px;top:221.6px" width="22" height="22" viewBox="0 0 22 22"><circle cx="12" cy="11" r="7" fill="none" stroke="#6a3a10" stroke-width="2"/><path d="M12 2v18M3 11h18M5.500 4.500l13 13M18.500 4.500l-13 13" stroke="#6a3a10" stroke-width="1.2"/><path d="M1 16h14l4 4h-14z" fill="#f08020"/><path d="M3 1v14" stroke="#333" stroke-width="2"/><path d="M16 1h5l-2.5 3z" fill="#000"/></svg><svg style="left:32.5px;top:221.6px" width="22" height="22" viewBox="0 0 22 22"><path d="M8 8h12v13h-12z" fill="#fff" stroke="#222"/><path d="M1 6l6-2l2 2l8-2v10l-14 3z" fill="#f0d070" stroke="#a08020" stroke-width=".7"/><path d="M9 3h6v4h-6z" fill="#30a040"/></svg></div>
<div id="vp" class="abs">
<svg width="1860" height="892" viewBox="60 109 1860 892" style="left:0;top:0" font-family="Liberation Sans,Noto Sans CJK SC,sans-serif">
<polygon points="715.7,569.5 776.5,574.5 776.5,577.5 715.7,572.7" fill="#154015" stroke="#0c0c0c" stroke-width="1"/><polygon points="715.7,580.7 775.3,584.5 775.3,587.5 715.7,583.8" fill="#154015" stroke="#0c0c0c" stroke-width="1"/><polygon points="765.4,578.5 776.5,576.0 776.5,630.6 770.0,625.0 764.0,600.0" fill="#2b7a2b" stroke="#0c0c0c" stroke-width="0.7"/><polygon points="708.0,560.0 719.0,561.0 719.0,590.0 708.0,589.0" fill="#1f5f1f" stroke="#0c0c0c" stroke-width="0.7"/><polygon points="502.5,590.0 536.0,587.8 661.0,601.9 661.0,609.4 576.0,614.0" fill="#1f6a1f" stroke="#0c0c0c" stroke-width="0.8"/><polygon points="502.5,590.0 576.0,614.0 576.0,627.0 507.0,611.5" fill="#2c862c" stroke="#0c0c0c" stroke-width="0.8"/><polyline points="507.0,600.0 526.0,605.0 532.5,610.0" fill="none" stroke="#0c0c0c" stroke-width="0.8"/><polygon points="532.5,610.6 555.0,616.0 555.0,620.5 532.5,615.0" fill="#237223" stroke="#0c0c0c" stroke-width="0.8"/><polyline points="547.0,614.0 547.0,618.5" fill="none" stroke="#0c0c0c" stroke-width="0.8"/><polyline points="541.0,597.0 558.0,596.0" fill="none" stroke="#0c0c0c" stroke-width="0.6"/><polyline points="548.0,604.0 572.0,603.0" fill="none" stroke="#0c0c0c" stroke-width="0.6"/><path d="M633.8 607 L690 600 L682.2 591 L682.2 443.3 L704.6 449 L704.6 527 Q716 533 715.7 545 L715.7 591 Q714 613 690.900 616 L640 617.500 Q630 614 633.8 607Z" fill="#216a21" stroke="#0c0c0c" stroke-width=".8"/><polygon points="682.2,443.3 700.0,448.0 700.0,590.0 690.0,600.0 682.2,591.0" fill="#2b7a2b" stroke="#0c0c0c" stroke-width="0.7"/><polygon points="684.0,445.0 704.6,450.0 704.6,486.0 684.0,480.0" fill="#2f862f" stroke="#0c0c0c" stroke-width="0.7"/><ellipse cx="689" cy="465" rx="7" ry="11.500" fill="#2f862f" stroke="#0c0c0c" stroke-width=".7"/><path d="M686 530l4 3M696 532l3 2" stroke="#0c0c0c" stroke-width=".8"/><path d="M686 545l4 3M696 547l3 2" stroke="#0c0c0c" stroke-width=".8"/><path d="M686 560l4 3M696 562l3 2" stroke="#0c0c0c" stroke-width=".8"/><path d="M686 575l4 3M696 577l3 2" stroke="#0c0c0c" stroke-width=".8"/><polyline points="685.0,527.0 685.0,576.0" fill="none" stroke="#0c0c0c" stroke-width="0.6" stroke-dasharray="3 2"/><polyline points="698.0,531.0 698.0,580.0" fill="none" stroke="#0c0c0c" stroke-width="0.6" stroke-dasharray="3 2"/><polygon points="537.1,581.0 581.7,577.3 653.7,600.8 606.5,609.5" fill="#060606" stroke="#0c0c0c" stroke-width="0.8"/><polygon points="537.1,581.0 606.5,609.5 606.5,613.5 537.1,585.0" fill="#2f862f" stroke="#0c0c0c" stroke-width="0.6"/><polygon points="578.0,599.0 606.5,609.5 653.7,600.8 652.0,604.0 606.5,613.5 578.0,603.0" fill="#6e0c0c" stroke="#0c0c0c" stroke-width="0.6"/><polyline points="548.6,581.7 573.0,591.3" fill="none" stroke="#e0e0e0" stroke-width="0.9" stroke-dasharray="3 1.500" stroke-opacity=".8"/><polyline points="556.7,581.0 588.2,593.0" fill="none" stroke="#e0e0e0" stroke-width="0.9" stroke-dasharray="1 4.500" stroke-opacity=".55"/><polyline points="564.7,580.3 603.5,594.4" fill="none" stroke="#e0e0e0" stroke-width="0.9" stroke-dasharray="1 4.500" stroke-opacity=".55"/><polyline points="572.8,579.6 618.8,595.7" fill="none" stroke="#e0e0e0" stroke-width="0.9" stroke-dasharray="1 4.500" stroke-opacity=".55"/><polyline points="580.8,578.9 634.3,596.8" fill="none" stroke="#e0e0e0" stroke-width="0.9" stroke-dasharray="1 4.500" stroke-opacity=".55"/><polygon points="600.3,394.9 682.2,418.5 679.8,542.5 597.9,519.0" fill="#7c7c7c" stroke="#0c0c0c" stroke-width="0.9"/><polygon points="672.5,416.0 682.2,418.5 679.8,542.5 670.5,540.0" fill="#686868" stroke="#0c0c0c" stroke-width="0.6"/><polygon points="600.3,394.9 603.0,393.5 684.5,417.0 682.2,418.5" fill="#9a9a9a" stroke="#0c0c0c" stroke-width="0.6"/><polygon points="603.3,402.8 670.6,424.2 668.6,528.4 601.6,507.0" fill="#7000e0" stroke="#0c0c0c" stroke-width="0.7"/><circle cx="631.5" cy="524.5" r="1.4" fill="#ddd" stroke="#111" stroke-width=".5"/><circle cx="636.5" cy="526.0" r="1.4" fill="#ddd" stroke="#111" stroke-width=".5"/><circle cx="641.5" cy="527.4" r="1.4" fill="#ddd" stroke="#111" stroke-width=".5"/><circle cx="646.5" cy="528.9" r="1.4" fill="#ddd" stroke="#111" stroke-width=".5"/><circle cx="651.5" cy="530.3" r="1.4" fill="#ddd" stroke="#111" stroke-width=".5"/><ellipse cx="661" cy="534" rx="1.800" ry="3.200" fill="#ddd" stroke="#111" stroke-width=".5"/>
<defs><linearGradient id="fp" x1="0" y1="0" x2="1" y2="0"><stop offset="0" stop-color="#f2f2f2"/><stop offset=".55" stop-color="#ffffff"/><stop offset="1" stop-color="#b8b8b8"/></linearGradient></defs><path d="M989.0 905.0L989.5 919.0h7L995.8 905.0z" fill="url(#fp)"/><rect x="986.0" y="919.0" width="14.500" height="4.200" fill="#e8e8e8" stroke="#0c0c0c" stroke-width=".9"/><path d="M981.0 923.0Q978.5 926.0 977.5 931.5L1007.0 932.0Q1006.5 926.0 1004.5 923.0Z" fill="url(#fp)" stroke="#0c0c0c" stroke-width=".7"/><path d="M976.0 930.6Q993.0 934.0 1010.0 931.6L1010.0 935.6Q993.0 939.5 976.0 934.8Z" fill="url(#fp)" stroke="#0c0c0c" stroke-width=".9"/>
<path d="M1299.8 912.0L1298.1 952.0h7L1306.6 912.0z" fill="url(#fp)"/><rect x="1294.6" y="952.0" width="14.500" height="4.200" fill="#e8e8e8" stroke="#0c0c0c" stroke-width=".9"/><path d="M1289.6 956.0Q1287.1 959.0 1286.1 964.5L1315.6 965.0Q1315.1 959.0 1313.1 956.0Z" fill="url(#fp)" stroke="#0c0c0c" stroke-width=".7"/><path d="M1284.6 963.6Q1301.6 967.0 1318.6 964.6L1318.6 968.6Q1301.6 972.5 1284.6 967.8Z" fill="url(#fp)" stroke="#0c0c0c" stroke-width=".9"/>
<ellipse cx="1238.0" cy="937.5" rx="12.8" ry="15.5" fill="#185418" stroke="#0c0c0c" stroke-width=".8"/><path d="M1231.0 922.5L1238.0 922.0L1238.0 953.0L1231.0 954.5Z" fill="#185418"/><ellipse cx="1231.0" cy="938.5" rx="12.8" ry="16.0" fill="#2f8a2f" stroke="#0c0c0c" stroke-width=".8"/><path d="M1224.0 917.0L1265.0 920.0L1264.0 926.0L1234.0 927.0L1234.0 941.5Q1229.0 944.5 1225.0 940.5L1229.0 925.0L1225.0 923.0Z" fill="#2f8a2f" stroke="#0c0c0c" stroke-width=".8"/><circle cx="1228.5" cy="939.5" r="2.2" fill="#256f25" stroke="#0c0c0c" stroke-width=".7"/>
<polygon points="1100.0,702.0 1330.5,684.3 1320.7,916.3 1119.6,927.7 1118.0,933.0 1090.5,934.1" fill="#626262" stroke="#0c0c0c" stroke-width="1"/>
<polygon points="1113.1,736.2 1315.9,717.7 1307.8,883.9 1106.6,901.7" fill="#5a5f5a" stroke="#0c0c0c" stroke-width="1"/>
<polygon points="1114.3,737.8 1314.6,719.5 1306.6,882.6 1107.9,900.2" fill="#373c37" stroke="#0c0c0c" stroke-width="1"/>
<path d="M1117.8 769.9q-.5-3 2.500-5.6L1148.4 761.1q2 .3 1 2.800l-1.500 2.800z" fill="#565d56" stroke="#0c0c0c" stroke-width=".7"/>
<path d="M1154.0 766.8q-.5-3 2.500-5.6L1186.0 758.0q2 .3 1 2.800l-1.500 2.800z" fill="#565d56" stroke="#0c0c0c" stroke-width=".7"/>
<path d="M1117.3 782.3q-.5-3 2.500-5.6L1148.0 773.5q2 .3 1 2.800l-1.500 2.800z" fill="#565d56" stroke="#0c0c0c" stroke-width=".7"/>
<path d="M1153.5 779.2q-.5-3 2.500-5.6L1185.5 770.4q2 .3 1 2.800l-1.500 2.800z" fill="#565d56" stroke="#0c0c0c" stroke-width=".7"/>
<path d="M1116.9 795.2q-.5-3 2.500-5.6L1147.5 786.4q2 .3 1 2.800l-1.500 2.800z" fill="#565d56" stroke="#0c0c0c" stroke-width=".7"/>
<path d="M1153.1 792.1q-.5-3 2.500-5.6L1185.1 783.3q2 .3 1 2.800l-1.500 2.800z" fill="#565d56" stroke="#0c0c0c" stroke-width=".7"/>
<path d="M1116.5 808.2q-.5-3 2.500-5.6L1147.1 799.4q2 .3 1 2.800l-1.500 2.800z" fill="#565d56" stroke="#0c0c0c" stroke-width=".7"/>
<path d="M1152.7 805.1q-.5-3 2.500-5.6L1184.7 796.3q2 .3 1 2.800l-1.500 2.800z" fill="#565d56" stroke="#0c0c0c" stroke-width=".7"/>
<path d="M1116.0 820.9q-.5-3 2.500-5.6L1146.6 812.1q2 .3 1 2.800l-1.500 2.800z" fill="#565d56" stroke="#0c0c0c" stroke-width=".7"/>
<path d="M1152.2 817.8q-.5-3 2.500-5.6L1184.2 809.0q2 .3 1 2.800l-1.500 2.800z" fill="#565d56" stroke="#0c0c0c" stroke-width=".7"/>
<path d="M1115.5 833.2q-.5-3 2.500-5.6L1146.2 824.4q2 .3 1 2.800l-1.500 2.800z" fill="#565d56" stroke="#0c0c0c" stroke-width=".7"/>
<path d="M1151.8 830.1q-.5-3 2.500-5.6L1183.8 821.3q2 .3 1 2.800l-1.500 2.800z" fill="#565d56" stroke="#0c0c0c" stroke-width=".7"/>
<path d="M1115.1 846.2q-.5-3 2.500-5.6L1145.7 837.4q2 .3 1 2.800l-1.500 2.800z" fill="#565d56" stroke="#0c0c0c" stroke-width=".7"/>
<path d="M1151.3 843.1q-.5-3 2.500-5.6L1183.3 834.3q2 .3 1 2.800l-1.500 2.800z" fill="#565d56" stroke="#0c0c0c" stroke-width=".7"/>
<path d="M1114.6 859.2q-.5-3 2.500-5.6L1145.2 850.4q2 .3 1 2.800l-1.500 2.800z" fill="#565d56" stroke="#0c0c0c" stroke-width=".7"/>
<path d="M1150.8 856.1q-.5-3 2.500-5.6L1182.8 847.3q2 .3 1 2.800l-1.500 2.800z" fill="#565d56" stroke="#0c0c0c" stroke-width=".7"/>
<ellipse cx="1246.8" cy="765.4" rx="11" ry="17.5" fill="#262c26" stroke="#0c0c0c" stroke-width=".8"/><ellipse cx="1246.8" cy="765.4" rx="9.3" ry="14.9" fill="none" stroke="#348434" stroke-width="1" stroke-opacity=".85"/><ellipse cx="1246.8" cy="765.4" rx="7.2" ry="11.4" fill="none" stroke="#348434" stroke-width="1" stroke-opacity=".85"/><ellipse cx="1246.8" cy="765.4" rx="5.0" ry="7.9" fill="none" stroke="#348434" stroke-width="1" stroke-opacity=".85"/><ellipse cx="1246.8" cy="765.4" rx="2.8" ry="4.4" fill="none" stroke="#348434" stroke-width="1" stroke-opacity=".85"/><path d="M1234.8 746.9L1258.8 783.9M1258.8 746.9L1234.8 783.9" stroke="#0c0c0c" stroke-width=".9"/><circle cx="1246.8" cy="765.4" r="2.2" fill="#0c0c0c"/>
<ellipse cx="1282.5" cy="762.2" rx="11" ry="17.5" fill="#262c26" stroke="#0c0c0c" stroke-width=".8"/><ellipse cx="1282.5" cy="762.2" rx="9.3" ry="14.9" fill="none" stroke="#348434" stroke-width="1" stroke-opacity=".85"/><ellipse cx="1282.5" cy="762.2" rx="7.2" ry="11.4" fill="none" stroke="#348434" stroke-width="1" stroke-opacity=".85"/><ellipse cx="1282.5" cy="762.2" rx="5.0" ry="7.9" fill="none" stroke="#348434" stroke-width="1" stroke-opacity=".85"/><ellipse cx="1282.5" cy="762.2" rx="2.8" ry="4.4" fill="none" stroke="#348434" stroke-width="1" stroke-opacity=".85"/><path d="M1270.5 743.7L1294.5 780.7M1294.5 743.7L1270.5 780.7" stroke="#0c0c0c" stroke-width=".9"/><circle cx="1282.5" cy="762.2" r="2.2" fill="#0c0c0c"/>
<ellipse cx="1242.9" cy="846.5" rx="11" ry="17.5" fill="#262c26" stroke="#0c0c0c" stroke-width=".8"/><ellipse cx="1242.9" cy="846.5" rx="9.3" ry="14.9" fill="none" stroke="#348434" stroke-width="1" stroke-opacity=".85"/><ellipse cx="1242.9" cy="846.5" rx="7.2" ry="11.4" fill="none" stroke="#348434" stroke-width="1" stroke-opacity=".85"/><ellipse cx="1242.9" cy="846.5" rx="5.0" ry="7.9" fill="none" stroke="#348434" stroke-width="1" stroke-opacity=".85"/><ellipse cx="1242.9" cy="846.5" rx="2.8" ry="4.4" fill="none" stroke="#348434" stroke-width="1" stroke-opacity=".85"/><path d="M1230.9 828.0L1254.9 865.0M1254.9 828.0L1230.9 865.0" stroke="#0c0c0c" stroke-width=".9"/><circle cx="1242.9" cy="846.5" r="2.2" fill="#0c0c0c"/>
<ellipse cx="1278.6" cy="843.3" rx="11" ry="17.5" fill="#262c26" stroke="#0c0c0c" stroke-width=".8"/><ellipse cx="1278.6" cy="843.3" rx="9.3" ry="14.9" fill="none" stroke="#348434" stroke-width="1" stroke-opacity=".85"/><ellipse cx="1278.6" cy="843.3" rx="7.2" ry="11.4" fill="none" stroke="#348434" stroke-width="1" stroke-opacity=".85"/><ellipse cx="1278.6" cy="843.3" rx="5.0" ry="7.9" fill="none" stroke="#348434" stroke-width="1" stroke-opacity=".85"/><ellipse cx="1278.6" cy="843.3" rx="2.8" ry="4.4" fill="none" stroke="#348434" stroke-width="1" stroke-opacity=".85"/><path d="M1266.6 824.8L1290.6 861.8M1290.6 824.8L1266.6 861.8" stroke="#0c0c0c" stroke-width=".9"/><circle cx="1278.6" cy="843.3" r="2.2" fill="#0c0c0c"/>
<circle cx="1117.5" cy="741.5" r="1.6" fill="#777" stroke="#0c0c0c" stroke-width=".6"/>
<circle cx="1311.5" cy="724" r="1.6" fill="#777" stroke="#0c0c0c" stroke-width=".6"/>
<circle cx="1304.5" cy="877" r="1.6" fill="#777" stroke="#0c0c0c" stroke-width=".6"/>
<circle cx="1110.5" cy="893.5" r="1.6" fill="#777" stroke="#0c0c0c" stroke-width=".6"/>
<polygon points="772.4,675.0 1100.1,703.5 1090.4,934.1 762.1,900.1" fill="#f6f6f6" stroke="#444" stroke-width="0.7"/>
<polygon points="791.3,703.8 1079.0,735.3 1070.9,901.7 783.8,870.9" fill="#e8e8e8" stroke="#0c0c0c" stroke-width="0.8"/>
<polygon points="792.5,705.0 934.2,720.6 927.2,883.0 785.3,868.9" fill="#939e93" stroke="#0c0c0c" stroke-width="1"/>
<polygon points="936.0,720.8 1077.6,736.4 1069.8,898.3 929.0,883.3" fill="#939e93" stroke="#0c0c0c" stroke-width="1"/>
<polygon points="905.5,774.2 918.4,775.7 916.4,827.8 903.4,826.0" fill="#2b7a2b" stroke="#0c0c0c" stroke-width="1"/>
<polyline points="911.5,781.0 910.0,821.0" fill="none" stroke="#0c0c0c" stroke-width="2.2"/>
<polyline points="911.5,783.0 910.2,819.0" fill="none" stroke="#2f8f2f" stroke-width="1"/>
<polygon points="943.7,776.1 956.7,777.7 954.6,830.8 941.6,829.0" fill="#f0f0f0" stroke="#0c0c0c" stroke-width="1"/>
<polyline points="950.0,782.0 948.2,824.0" fill="none" stroke="#0c0c0c" stroke-width="3"/>
<polyline points="950.0,790.0 948.4,822.0" fill="none" stroke="#f0f0f0" stroke-width="1.6"/>
<rect x="777.3" y="724.2" width="21.1" height="28.3" fill="#f0f0f0" stroke="#111" stroke-width=".9"/><path d="M786.8 724.2v28.3M777.3 733.6h9.5M777.3 743.1h9.5" stroke="#111" stroke-width=".9" fill="none"/><circle cx="792.5" cy="729.9" r="1.7" fill="#999" stroke="#111" stroke-width=".8"/><circle cx="792.5" cy="738.4" r="1.7" fill="#999" stroke="#111" stroke-width=".8"/><circle cx="792.5" cy="746.8" r="1.7" fill="#999" stroke="#111" stroke-width=".8"/>
<rect x="772.4" y="819.0" width="21.1" height="29.2" fill="#f0f0f0" stroke="#111" stroke-width=".9"/><path d="M781.9 819.0v29.2M772.4 828.7h9.5M772.4 838.5h9.5" stroke="#111" stroke-width=".9" fill="none"/><circle cx="787.6" cy="824.8" r="1.7" fill="#999" stroke="#111" stroke-width=".8"/><circle cx="787.6" cy="833.6" r="1.7" fill="#999" stroke="#111" stroke-width=".8"/><circle cx="787.6" cy="842.4" r="1.7" fill="#999" stroke="#111" stroke-width=".8"/>
<rect x="1066.0" y="754.1" width="11.4" height="29.2" fill="#e4e4ea" stroke="#111" stroke-width=".9"/><rect x="1072.3" y="755.1" width="4.6" height="27.2" fill="#5a5d68"/><path d="M1071.7 754.1v29.2M1066.0 763.8h11.4M1066.0 773.6h11.4" stroke="#111" stroke-width=".8" fill="none"/>
<rect x="1061.8" y="849.8" width="12.4" height="29.2" fill="#e4e4ea" stroke="#111" stroke-width=".9"/><rect x="1068.6" y="850.8" width="5.0" height="27.2" fill="#5a5d68"/><path d="M1068.0 849.8v29.2M1061.8 859.5h12.4M1061.8 869.3h12.4" stroke="#111" stroke-width=".8" fill="none"/>
<rect x="1083.2" y="760.2" width="1.6" height="1.6" fill="#222"/>
<rect x="1083.0" y="768.2" width="1.6" height="1.6" fill="#222"/>
<rect x="1082.8" y="776.2" width="1.6" height="1.6" fill="#222"/>
<rect x="1078.7" y="855.2" width="1.6" height="1.6" fill="#222"/>
<rect x="1078.5" y="863.2" width="1.6" height="1.6" fill="#222"/>
<rect x="1078.3" y="871.2" width="1.6" height="1.6" fill="#222"/>
<polygon points="773.0,666.6 1099.0,701.0 1099.5,708.5 772.3,676.5" fill="#787878" stroke="#222" stroke-width="0.6"/>
<polygon points="1099.0,701.5 1330.5,682.8 1330.5,688.6 1099.5,708.5" fill="#3a3c3a" stroke="#111" stroke-width="0.6"/>
<ellipse cx="846.0" cy="931.5" rx="13.6" ry="16.5" fill="#185418" stroke="#0c0c0c" stroke-width=".8"/><path d="M839.0 915.5L846.0 915.0L846.0 948.0L839.0 949.5Z" fill="#185418"/><ellipse cx="839.0" cy="932.5" rx="13.6" ry="17.0" fill="#2f8a2f" stroke="#0c0c0c" stroke-width=".8"/><path d="M816.5 907.5L857.0 910.5L856.0 916.5L842.0 917.5L842.0 935.5Q837.0 938.5 833.0 934.5L821.5 915.5L817.5 913.5Z" fill="#2f8a2f" stroke="#0c0c0c" stroke-width=".8"/><circle cx="836.5" cy="933.5" r="2.2" fill="#256f25" stroke="#0c0c0c" stroke-width=".7"/>
<ellipse cx="1044.0" cy="952.6" rx="14.0" ry="17.0" fill="#185418" stroke="#0c0c0c" stroke-width=".8"/><path d="M1037.0 936.1L1044.0 935.6L1044.0 969.6L1037.0 971.1Z" fill="#185418"/><ellipse cx="1037.0" cy="953.6" rx="14.0" ry="17.5" fill="#2f8a2f" stroke="#0c0c0c" stroke-width=".8"/><path d="M1009.0 926.0L1069.0 929.0L1068.0 935.0L1040.0 936.0L1040.0 956.6Q1035.0 959.6 1031.0 955.6L1014.0 934.0L1010.0 932.0Z" fill="#2f8a2f" stroke="#0c0c0c" stroke-width=".8"/><circle cx="1034.5" cy="954.6" r="2.2" fill="#256f25" stroke="#0c0c0c" stroke-width=".7"/>
<path d="M774.9 901.0L772.3 938.5h7L781.7 901.0z" fill="url(#fp)"/><rect x="768.8" y="938.5" width="14.500" height="4.200" fill="#e8e8e8" stroke="#0c0c0c" stroke-width=".9"/><path d="M763.8 942.5Q761.3 945.5 760.3 951.0L789.8 951.5Q789.3 945.5 787.3 942.5Z" fill="url(#fp)" stroke="#0c0c0c" stroke-width=".7"/><path d="M758.8 950.1Q775.8 953.5 792.8 951.1L792.8 955.1Q775.8 959.0 758.8 954.3Z" fill="url(#fp)" stroke="#0c0c0c" stroke-width=".9"/>
<path d="M1082.9 934.0L1081.4 971.0h7L1089.7 934.0z" fill="url(#fp)"/><rect x="1077.9" y="971.0" width="14.500" height="4.200" fill="#e8e8e8" stroke="#0c0c0c" stroke-width=".9"/><path d="M1072.9 975.0Q1070.4 978.0 1069.4 983.5L1098.9 984.0Q1098.4 978.0 1096.4 975.0Z" fill="url(#fp)" stroke="#0c0c0c" stroke-width=".7"/><path d="M1067.9 982.6Q1084.9 986.0 1101.9 983.6L1101.9 987.6Q1084.9 991.5 1067.9 986.8Z" fill="url(#fp)" stroke="#0c0c0c" stroke-width=".9"/>
<polygon points="1131.5,359.6 1344.1,341.6 1330.5,684.0 1099.1,702.0 1112.1,393.6" fill="#373c37" stroke="#0c0c0c" stroke-width="1"/>
<polygon points="1145.2,426.6 1310.0,413.0 1301.3,614.2 1136.4,628.8" fill="#3b403b" stroke="#0c0c0c" stroke-width="0.9"/>
<polyline points="1227.3,420.0 1219.2,621.3" fill="none" stroke="#0c0c0c" stroke-width="1"/>
<polyline points="1229.3,419.8 1221.2,621.1" fill="none" stroke="#5a5f5a" stroke-width="0.8"/>
<path d="M1160.5 474.1Q1160.8 468.1 1166.8 467.5L1196.9 464.8Q1202.9 464.2 1202.7 470.2L1199.9 574.1Q1199.7 580.1 1193.7 580.8L1161.9 584.3Q1155.9 585.0 1156.2 579.0Z" fill="#3b3807" stroke="#0c0c0c" stroke-width="0.8"/>
<path d="M1246.5 467.7Q1246.7 461.7 1252.7 461.0L1284.6 457.5Q1290.6 456.8 1290.3 462.8L1284.4 566.0Q1284.1 572.0 1278.1 572.7L1249.5 576.2Q1243.5 576.9 1243.7 570.9Z" fill="#3b3807" stroke="#0c0c0c" stroke-width="0.8"/>
<polygon points="1207.2,495.5 1217.5,494.5 1215.6,547.0 1205.3,548.0" fill="#245a24" stroke="#0c0c0c" stroke-width="1"/>
<polyline points="1212.5,501.0 1210.6,541.0" fill="none" stroke="#0c0c0c" stroke-width="2"/>
<polygon points="1233.8,494.0 1243.5,493.0 1241.6,545.5 1231.9,546.5" fill="#555" stroke="#0c0c0c" stroke-width="1"/>
<polyline points="1238.8,499.0 1237.0,539.0" fill="none" stroke="#d8d8d8" stroke-width="2.2"/>
<polyline points="1238.8,499.0 1237.0,539.0" fill="none" stroke="#0c0c0c" stroke-width="0.8"/>
<rect x="1142.3" y="448.7" width="12.9" height="27.6" fill="#e4e4ea" stroke="#111" stroke-width=".9"/><rect x="1149.4" y="449.7" width="5.2" height="25.6" fill="#5a5d68"/><path d="M1148.8 448.7v27.6M1142.3 457.9h12.9M1142.3 467.1h12.9" stroke="#111" stroke-width=".8" fill="none"/>
<rect x="1136.4" y="581.1" width="12.3" height="28.2" fill="#e4e4ea" stroke="#111" stroke-width=".9"/><rect x="1143.2" y="582.1" width="4.9" height="26.2" fill="#5a5d68"/><path d="M1142.6 581.1v28.2M1136.4 590.5h12.3M1136.4 599.9h12.3" stroke="#111" stroke-width=".8" fill="none"/>
<rect x="1303.5" y="434.1" width="19.5" height="27.6" fill="#f0f0f0" stroke="#111" stroke-width=".9"/><path d="M1312.3 434.1v27.6M1303.5 443.3h8.8M1303.5 452.5h8.8" stroke="#111" stroke-width=".9" fill="none"/><circle cx="1317.5" cy="439.6" r="1.7" fill="#999" stroke="#111" stroke-width=".8"/><circle cx="1317.5" cy="447.9" r="1.7" fill="#999" stroke="#111" stroke-width=".8"/><circle cx="1317.5" cy="456.2" r="1.7" fill="#999" stroke="#111" stroke-width=".8"/>
<rect x="1297.0" y="567.1" width="20.5" height="27.6" fill="#f0f0f0" stroke="#111" stroke-width=".9"/><path d="M1306.2 567.1v27.6M1297.0 576.3h9.2M1297.0 585.5h9.2" stroke="#111" stroke-width=".9" fill="none"/><circle cx="1311.8" cy="572.6" r="1.7" fill="#999" stroke="#111" stroke-width=".8"/><circle cx="1311.8" cy="580.9" r="1.7" fill="#999" stroke="#111" stroke-width=".8"/><circle cx="1311.8" cy="589.2" r="1.7" fill="#999" stroke="#111" stroke-width=".8"/>
<polygon points="807.0,324.3 1026.0,307.0 1344.1,341.6 1131.5,359.6" fill="#6c766c" stroke="#0c0c0c" stroke-width="1"/>
<polygon points="867.1,330.4 905.0,326.0 1120.0,349.0 1071.5,352.1" fill="#5f695f" stroke="#0c0c0c" stroke-width="0.7"/>
<polyline points="880.0,334.5 1085.0,356.0" fill="none" stroke="#0c0c0c" stroke-width="0.7"/>
<polygon points="807.0,324.3 1131.5,359.6 1112.1,393.6 786.2,358.5" fill="#9aa59a" stroke="#0c0c0c" stroke-width="1"/>
<polyline points="867.1,330.4 846.0,364.4" fill="none" stroke="#0c0c0c" stroke-width="1"/>
<polyline points="1071.5,352.1 1053.7,387.1" fill="none" stroke="#0c0c0c" stroke-width="1"/>
<polyline points="805.5,327.0 1129.8,362.8" fill="none" stroke="#0c0c0c" stroke-width="0.6" stroke-dasharray="7 3"/>
<polygon points="786.2,358.5 1112.1,393.6 1099.1,702.0 772.4,668.0" fill="#939e93" stroke="#0c0c0c" stroke-width="1"/>
<polyline points="789.2,361.5 1111.8,397.0" fill="none" stroke="#0c0c0c" stroke-width="0.6"/>
<polyline points="788.6,361.5 775.2,668.3" fill="none" stroke="#0c0c0c" stroke-width="0.6"/>
<polyline points="846.0,364.4 837.9,575.2" fill="none" stroke="#0c0c0c" stroke-width="1"/>
<polyline points="847.6,364.6 839.5,576.9" fill="none" stroke="#aeb8ae" stroke-width="0.7"/>
<polyline points="1053.7,387.1 1037.4,694.0" fill="none" stroke="#0c0c0c" stroke-width="1"/>
<polyline points="1055.3,387.3 1039.0,694.2" fill="none" stroke="#aeb8ae" stroke-width="0.7"/>
<polygon points="1131.5,359.6 1136.0,360.3 1116.6,394.2 1103.6,702.0 1099.1,702.0 1112.1,393.6" fill="#a2aca2" stroke="#0c0c0c" stroke-width="0.7"/>
<path d="M882.3 396.9Q882.6 389.9 889.6 390.7L1006.9 403.6Q1013.9 404.4 1013.6 411.4L1009.2 523.4Q1008.9 530.4 1001.9 529.6L884.1 515.9Q877.1 515.1 877.4 508.1Z" fill="#b9a1a1" stroke="#0c0c0c" stroke-width="1"/>
<circle cx="904.7" cy="388" r="1.5" fill="#111"/>
<circle cx="991.8" cy="398.2" r="1.5" fill="#111"/>
<circle cx="877" cy="453" r="1.5" fill="#111"/>
<circle cx="1014.6" cy="467.5" r="1.5" fill="#111"/>
<circle cx="985.5" cy="532" r="1.5" fill="#111"/>
<polygon points="803.2,441.5 830.7,443.8 823.3,603.8 796.3,599.6" fill="#939e93" stroke="#0c0c0c" stroke-width="0.9"/>
<polyline points="805.2,443.5 798.5,599.2" fill="none" stroke="#5a645a" stroke-width="0.8"/>
<circle cx="815.8" cy="463.3" r="7.8" fill="#b80c0c" stroke="#200" stroke-width="1"/><circle cx="815" cy="462.5" r="4.6" fill="#960808" stroke="#400" stroke-width=".6"/>
<ellipse cx="816.5" cy="487.6" rx="6.8" ry="6.8" fill="#5a5a5a" stroke="#0c0c0c" stroke-width=".9"/><ellipse cx="814.2" cy="487.6" rx="5.6" ry="6.2" fill="#fbfbfb" stroke="#333" stroke-width=".6"/>
<ellipse cx="815.5" cy="512" rx="6.8" ry="6.8" fill="#5a5a5a" stroke="#0c0c0c" stroke-width=".9"/><ellipse cx="813.2" cy="512" rx="5.6" ry="6.2" fill="#fbfbfb" stroke="#333" stroke-width=".6"/>
<ellipse cx="814.1999999999999" cy="536.9" rx="6.8" ry="6.8" fill="#5a5a5a" stroke="#0c0c0c" stroke-width=".9"/><ellipse cx="811.9" cy="536.9" rx="5.6" ry="6.2" fill="#fbfbfb" stroke="#333" stroke-width=".6"/>
<ellipse cx="813.1999999999999" cy="561.3" rx="6.8" ry="6.8" fill="#5a5a5a" stroke="#0c0c0c" stroke-width=".9"/><ellipse cx="810.9" cy="561.3" rx="5.6" ry="6.2" fill="#fbfbfb" stroke="#333" stroke-width=".6"/>
<polygon points="913.2,552.5 965.1,558.4 965.1,568.7 913.2,563.9" fill="#565a56" stroke="#0c0c0c" stroke-width="0.9"/>
<polygon points="916.0,556.0 951.0,560.0 951.0,565.0 916.0,561.5" fill="#6d726d" stroke="#222" stroke-width="0.5"/>
<ellipse cx="956.5" cy="563.5" rx="4.6" ry="3.8" fill="#444" stroke="#0c0c0c" stroke-width=".8"/>
<polygon points="839.5,576.9 1042.3,597.3 1039.0,692.5 833.0,671.0" fill="#363a36" stroke="#0c0c0c" stroke-width="0.9"/><polygon points="837.4,575.2 844.8,576.0 838.8,671.6 832.4,671.0" fill="#939e93" stroke="#0c0c0c" stroke-width="0.8"/><polygon points="842.4,659.3 894.5,656.8 1040.8,666.8 1040.8,694.0 832.4,672.3" fill="#4f4f4f"/><polyline points="845.5,593.6 883.3,590.5" fill="none" stroke="#0c0c0c" stroke-width="0.6"/><polyline points="878.3,599.8 892.6,599.1" fill="none" stroke="#0c0c0c" stroke-width="0.6"/><polygon points="878.3,599.8 892.0,599.1 892.0,607.2 878.3,606.0" fill="#7c867c" stroke="#111" stroke-width="0.4"/><polygon points="1023.5,607.2 1042.1,607.2 1042.1,614.0 1023.5,614.0" fill="#b8bad4" stroke="#111" stroke-width="0.5"/><polygon points="1025.9,614.0 1041.4,614.0 1041.4,620.9 1025.9,620.9" fill="#c0a8a8" stroke="#111" stroke-width="0.5"/><polygon points="1034.6,622.1 1040.8,622.1 1040.8,634.5 1034.6,634.5" fill="#c4c6da" stroke="#111" stroke-width="0.5"/><polygon points="961.4,601.0 1013.5,599.1 1023.5,601.0 1023.5,606.0 961.4,606.6" fill="#2c2c30" stroke="#0c0c0c" stroke-width="0.5"/><polygon points="970.1,617.1 1011.1,617.1 1011.1,639.5 970.1,639.5" fill="#3a3a40" stroke="#111" stroke-width="0.5"/><polygon points="991.2,613.4 1003.6,613.4 1003.6,625.8 991.2,625.8" fill="#c4c6da" stroke="#111" stroke-width="0.5"/><polygon points="981.3,634.5 991.2,634.5 991.2,649.4 981.3,649.4" fill="#c4c6da" stroke="#111" stroke-width="0.5"/><polygon points="977.6,617.1 990.0,617.1 990.0,628.3 977.6,628.3" fill="#1c1c20" stroke="#111" stroke-width="0.5"/><polygon points="992.5,634.5 1013.5,634.5 1013.5,639.5 992.5,639.5" fill="#e8e8ee" stroke="#111" stroke-width="0.5"/><polygon points="991.2,643.2 1011.1,643.2 1011.1,650.6 991.2,650.6" fill="#2c2c30" stroke="#111" stroke-width="0.5"/><polygon points="892.6,582.4 899.4,582.4 899.4,606.0 892.6,606.0" fill="#c9cbd8" stroke="#111" stroke-width="0.5"/><polygon points="882.7,581.2 892.0,581.2 892.0,591.1 882.7,591.1" fill="#fafafa" stroke="#111" stroke-width="0.5"/><polygon points="899.4,583.6 936.6,587.4 936.6,606.0 899.4,606.0" fill="#4a4a52" stroke="#0c0c0c" stroke-width="0.5"/><polygon points="900.7,583.0 923.0,585.5 941.6,602.9 919.3,601.0" fill="#2b6b2b" stroke="#0c0c0c" stroke-width="0.5"/><polygon points="932.9,587.4 958.3,589.8 958.3,603.5 941.6,601.6" fill="#ececf4" stroke="#222" stroke-width="0.5"/><ellipse cx="955.9" cy="597.9" rx="3.6" ry="6.6" fill="#55555c" stroke="#111" stroke-width=".6"/><polygon points="960.2,589.8 968.9,589.8 968.9,598.5 960.2,598.5" fill="#a8a8a8" stroke="#111" stroke-width="0.5"/><polygon points="968.9,590.5 987.5,590.5 987.5,601.0 968.9,601.0" fill="#141414" stroke="#111" stroke-width="0.5"/><polygon points="978.2,591.1 983.1,591.1 983.1,599.8 979.4,599.8" fill="#e8a020"/><polyline points="990.0,595.4 1023.5,596.7" fill="none" stroke="#d89020" stroke-width="1.2" stroke-dasharray="3 2"/><polygon points="961.4,601.0 985.0,601.6 983.8,606.6 961.4,606.0" fill="#b8bad4" stroke="#222" stroke-width="0.4"/><polygon points="965.2,615.9 998.7,607.2 1013.5,607.2 991.2,616.1 971.4,617.8" fill="#f4f4f4" stroke="#333" stroke-width="0.5"/><polygon points="997.4,607.2 1008.6,607.0 1007.3,610.9 998.7,611.6" fill="#dcdce6" stroke="#333" stroke-width="0.4"/><polygon points="937.9,614.7 966.4,616.1 965.2,622.7 937.9,620.2" fill="#b39c9c" stroke="#222" stroke-width="0.5"/><polygon points="894.5,607.2 936.6,606.6 936.6,629.5 911.8,630.8 894.5,622.1" fill="#5a5a5a" stroke="#0c0c0c" stroke-width="0.5"/><polygon points="894.5,607.2 926.7,606.0 926.7,608.5 894.5,609.9" fill="#e8e8ee" stroke="#222" stroke-width="0.4"/><polygon points="892.6,610.9 909.3,610.9 909.3,619.0 892.6,619.0" fill="#f0f0f4" stroke="#111" stroke-width="0.5"/><polyline points="924.2,609.7 924.2,628.3" fill="none" stroke="#e0e0e8" stroke-width="1.6"/><polyline points="920.5,629.3 928.0,629.3" fill="none" stroke="#e0e0e8" stroke-width="1.4"/><polygon points="859.7,607.2 894.5,606.0 894.5,610.9 859.7,612.8" fill="#3c403c" stroke="#0c0c0c" stroke-width="0.5"/><polygon points="856.0,612.2 870.9,610.9 870.9,632.0 862.2,632.0 856.0,623.3" fill="#b8bacc" stroke="#0c0c0c" stroke-width="0.6"/><polygon points="861.0,612.8 864.7,612.8 864.7,630.8 861.0,630.8" fill="#e8e8f0" stroke="#333" stroke-width="0.3"/><defs><linearGradient id="cy" x1="0" y1="0" x2="0" y2="1"><stop offset="0" stop-color="#b8b8cc"/><stop offset=".35" stop-color="#ececf6"/><stop offset="1" stop-color="#8c8ca0"/></linearGradient></defs><polygon points="872.8,617.8 905.6,619.6 911.8,622.1 911.8,632.0 904.4,632.0 872.8,628.3" fill="url(#cy)" stroke="#222" stroke-width="0.5"/><ellipse cx="910.6" cy="626.4" rx="3.4" ry="5.4" fill="#707078" stroke="#111" stroke-width=".6"/><polygon points="936.6,623.3 967.6,622.1 970.7,638.2 937.3,637.0" fill="#030303"/><polygon points="859.7,633.3 877.1,632.6 892.0,639.5 892.0,656.8 874.6,656.8" fill="#4a4a50" stroke="#0c0c0c" stroke-width="0.5"/><polyline points="862.2,634.5 875.9,655.6" fill="none" stroke="#c9cbd8" stroke-width="1.2"/><polygon points="894.5,633.3 915.5,634.5 928.0,644.4 904.4,643.2" fill="#6c6c6c" stroke="#0c0c0c" stroke-width="0.5"/><polygon points="892.6,634.5 896.9,634.5 896.9,656.8 892.6,656.8" fill="#c9cbd8" stroke="#222" stroke-width="0.4"/><polygon points="896.9,645.7 1011.1,644.4 1011.1,655.6 928.0,659.3 896.9,656.8" fill="#44444a" stroke="#0c0c0c" stroke-width="0.5"/><polygon points="926.7,652.5 1011.1,649.4 1011.1,655.6 928.0,659.3" fill="#8a8a98" stroke="#111" stroke-width="0.4"/><polyline points="928.0,659.6 1011.1,655.8" fill="none" stroke="#0c0c0c" stroke-width="1"/><polygon points="924.2,641.3 942.8,637.6 972.6,640.1 972.6,644.4 931.7,645.7" fill="#c8c8d2" stroke="#222" stroke-width="0.5"/><ellipse cx="934.8" cy="643.8" rx="2" ry="2.6" fill="#333"/><polygon points="940.4,643.8 971.4,640.1 975.1,644.4 973.8,651.2 966.4,650.6" fill="#f2f2c2" stroke="#333" stroke-width="0.5"/><ellipse cx="974.5" cy="645.4" rx="2.4" ry="5.4" fill="#3a3a3a" stroke="#111" stroke-width=".5"/><polygon points="892.6,656.8 924.2,656.8 924.2,673.0 889.5,671.1" fill="#c9cbd8" stroke="#222" stroke-width="0.5"/><polygon points="889.5,671.1 924.2,673.0 924.2,676.1 889.5,674.2" fill="#9a9caa" stroke="#222" stroke-width="0.4"/><circle cx="898.2" cy="659.9" r="1.500" fill="#1c1c1c"/><circle cx="908.1" cy="661.8" r="1.500" fill="#1c1c1c"/><circle cx="918.0" cy="661.8" r="1.500" fill="#1c1c1c"/><polygon points="928.0,665.5 932.3,665.5 932.3,673.0 928.0,673.0" fill="#f4f4f4" stroke="#111" stroke-width="0.5"/><polygon points="975.1,661.2 993.7,661.2 993.7,666.8 975.1,666.8" fill="#f4f4f4" stroke="#111" stroke-width="0.5"/><polygon points="882.7,666.8 889.5,666.8 889.5,661.2 892.6,661.2 892.6,670.7 882.7,670.2" fill="#e8e020" stroke="#3a3800" stroke-width="0.5"/><polygon points="941.0,666.8 961.4,664.3 961.4,669.2 968.3,671.7 968.3,676.7 941.0,676.7" fill="#8a8a20" stroke="#3a3800" stroke-width="0.5"/><polygon points="941.0,666.8 954.0,665.5 954.0,669.2 944.7,669.9 944.7,673.6 954.0,673.9 954.0,676.9 941.0,676.7" fill="#e8e020" stroke="#3a3800" stroke-width="0.5"/><polygon points="1003.0,660.5 1012.3,660.5 1012.3,671.7 1003.0,669.2" fill="#e8e020" stroke="#3a3800" stroke-width="0.5"/><polygon points="1011.7,639.5 1040.2,639.5 1040.2,673.6 1011.7,673.6" fill="#fafafa" stroke="#555" stroke-width="0.5"/><polygon points="1022.8,673.6 1032.1,673.6 1032.1,683.5 1022.8,683.5" fill="#c9cbe0" stroke="#555" stroke-width="0.5"/><polygon points="1032.1,673.6 1038.3,673.6 1038.3,683.5 1032.1,683.5" fill="#4a4a50" stroke="#111" stroke-width="0.4"/><polygon points="1028.4,633.3 1040.2,633.3 1040.2,639.5 1028.4,639.5" fill="#f0f0f0" stroke="#333" stroke-width="0.4"/><polyline points="1022.2,601.0 1022.2,639.5" fill="none" stroke="#0c0c0c" stroke-width="0.8"/>
<defs><linearGradient id="wg" x1="0" y1="0" x2="0" y2="1"><stop offset="0" stop-color="#f47a1e"/><stop offset="1" stop-color="#f8a818"/></linearGradient><linearGradient id="wf" x1="0" y1="0" x2="1" y2="1"><stop offset="0" stop-color="#f8b818"/><stop offset="1" stop-color="#f47a1e"/></linearGradient></defs><g opacity=".93"><g transform="translate(880,500) scale(.08333)" fill="url(#wg)"><path d="M228 96L268 150V395Q300 440 345 452V470Q270 455 228 415Z"/><path d="M175 140L213 185V420Q260 455 345 470V480H300Q220 470 175 435Z"/><path d="M133 200L165 235V440Q230 462 345 478V482H133Z"/><g transform="translate(810,0) scale(-1,1)"><path d="M228 96L268 150V395Q300 440 345 452V470Q270 455 228 415Z"/><path d="M175 140L213 185V420Q260 455 345 470V480H300Q220 470 175 435Z"/><path d="M133 200L165 235V440Q230 462 345 478V482H133Z"/></g><ellipse cx="400" cy="460" rx="55" ry="14" fill="#f4701a"/><path d="M405 120Q300 150 290 250Q295 300 330 325Q310 240 385 215V120Z" fill="url(#wf)"/><path d="M385 215V440Q500 400 520 300Q520 250 480 230Q500 300 420 345V215Z" fill="url(#wf)"/></g><text x="947" y="528.500" font-size="16.800" font-weight="500" fill="#fa8a20" textLength="82" lengthAdjust="spacingAndGlyphs">智造资料网</text><text x="947" y="538.200" font-size="4.800" font-weight="bold" fill="#f89020" textLength="82" lengthAdjust="spacingAndGlyphs">INTELLIGENT MANUFACTURING DATA</text></g>
<polygon points="920.6,219.5 927.1,220.5 922.2,314.1 920.0,318.6 916.5,316.0" fill="#8d988d" stroke="#0c0c0c" stroke-width="0.7"/><polygon points="927.1,220.5 993.6,226.0 1121.8,242.7 1120.2,335.2 922.2,314.1" fill="#939e93" stroke="#0c0c0c" stroke-width="1"/><polyline points="927.1,223.6 1121.5,245.4" fill="none" stroke="#0c0c0c" stroke-width="0.8" stroke-dasharray="6 3"/><polygon points="920.0,318.6 922.2,314.1 1120.2,335.2 1119.0,339.5" fill="#5f695f" stroke="#0c0c0c" stroke-width="0.6"/><polygon points="787.6,200.6 891.9,189.6 1114.0,212.6 1121.8,229.8 1120.8,242.7 993.6,225.0 923.7,217.5 787.6,203.0" fill="#6c766c" stroke="#0c0c0c" stroke-width="1"/><polygon points="993.6,222.0 1112.5,215.5 1121.8,229.8 1120.8,242.7 993.6,225.5" fill="#5a625a" stroke="#0c0c0c" stroke-width="0.6"/><polygon points="787.6,201.5 923.7,216.0 993.6,223.0 993.6,226.0 923.7,220.0 787.6,205.4" fill="#8c978c" stroke="#0c0c0c" stroke-width="0.6"/><polygon points="884.0,199.0 925.0,193.5 1053.0,208.2 1003.0,215.0 934.0,209.3" fill="#8a7676" stroke="#0c0c0c" stroke-width="0.6"/><polygon points="878.6,205.0 885.5,194.5 922.0,197.5 932.0,210.5 924.0,211.7 918.0,201.5 888.5,199.5 885.0,206.5" fill="#707070" stroke="#0c0c0c" stroke-width="0.7"/><polygon points="886.5,199.5 893.0,200.0 893.0,207.5 886.5,207.0" fill="#4a4a4a"/><polygon points="925.0,206.0 932.0,206.5 932.0,212.0 925.0,211.5" fill="#4a4a4a"/><polygon points="925.7,298.3 934.0,299.0 933.5,314.5 925.2,313.6" fill="#ececf6" stroke="#0c0c0c" stroke-width="0.8"/><polygon points="928.5,301.0 932.0,301.3 931.6,312.0 928.2,311.6" fill="#50505a"/><polygon points="911.4,304.4 928.0,302.8 928.0,308.9 912.1,312.7" fill="#47474e" stroke="#0c0c0c" stroke-width="0.7"/><polygon points="898.5,329.3 909.8,303.8 915.0,308.1 910.2,327.8" fill="#50505a" stroke="#0c0c0c" stroke-width="0.7"/><polygon points="894.0,328.5 906.0,302.8 909.8,302.8 898.5,329.3" fill="#ececf6" stroke="#0c0c0c" stroke-width="0.7"/><circle cx="904.800" cy="325" r="1.500" fill="#ececf6"/><circle cx="906" cy="318.500" r="1.200" fill="#ececf6"/><polygon points="1062.4,327.0 1083.6,329.5 1083.6,334.5 1062.4,332.0" fill="#ececf6" stroke="#0c0c0c" stroke-width="0.7"/><polyline points="1066.0,330.0 1080.0,331.6" fill="none" stroke="#333" stroke-width="1.2" stroke-dasharray="2 2"/><polygon points="1063.2,336.0 1082.0,338.0 1082.0,342.0 1063.2,340.0" fill="#ececf6" stroke="#333" stroke-width="0.5"/><polygon points="1115.3,318.7 1121.3,319.2 1121.3,335.8 1115.3,335.3" fill="#3a3a40" stroke="#0c0c0c" stroke-width="0.7"/><polygon points="1098.7,326.3 1119.8,324.0 1119.8,330.0 1098.7,333.0" fill="#47474e" stroke="#0c0c0c" stroke-width="0.7"/><polygon points="1085.1,349.2 1093.4,324.0 1100.2,327.8 1095.6,347.4" fill="#50505a" stroke="#0c0c0c" stroke-width="0.7"/><polygon points="1080.5,348.9 1089.6,324.0 1093.4,323.2 1085.1,349.2" fill="#ececf6" stroke="#0c0c0c" stroke-width="0.7"/><circle cx="1091.500" cy="344.500" r="1.500" fill="#ececf6"/><circle cx="1092.800" cy="338" r="1.200" fill="#ececf6"/><polygon points="961.0,316.0 985.0,318.5 985.0,320.5 961.0,318.0" fill="#e6e6f2" stroke="#333" stroke-width="0.4"/><polygon points="962.0,325.0 990.0,328.0 994.0,331.0 990.0,332.5 962.0,329.0" fill="#e6e6f2" stroke="#333" stroke-width="0.4"/>
<ellipse cx="1131.500" cy="351.500" rx="14.600" ry="3.600" fill="#f0f0f0" stroke="#444" stroke-width=".7"/><ellipse cx="1131.500" cy="349" rx="8" ry="2.400" fill="#dcdce6" stroke="#444" stroke-width=".6"/><polygon points="1126.0,317.0 1138.0,317.0 1137.5,349.0 1125.5,349.0" fill="#b6bacc" stroke="#444" stroke-width="0.6"/><polygon points="1126.0,317.0 1130.0,317.0 1129.5,349.0 1125.5,349.0" fill="#8a8ea0"/><path d="M1119.2 304.4L1148.3 304.4L1147.8 317.4Q1133.2 321.0 1118.6 317.4Z" fill="#f4f4f4" stroke="#0c0c0c" stroke-width=".7"/><path d="M1120.6 275.2L1149.3 275.2L1148.3 304.4Q1133.7 308.0 1119.2 304.4Z" fill="#00e23c" stroke="#0c0c0c" stroke-width=".7"/><path d="M1120.8 270.0L1149.5 270.0L1149.3 275.2Q1134.9 278.8 1120.6 275.2Z" fill="#2b8a2b" stroke="#0c0c0c" stroke-width=".7"/><path d="M1121.7 250.9L1150.2 250.9L1149.4 271.5Q1135.1 275.1 1120.8 271.5Z" fill="#ff8a00" stroke="#0c0c0c" stroke-width=".7"/><path d="M1122.0 246.0L1150.3 246.0L1150.2 250.9Q1136.0 254.5 1121.7 250.9Z" fill="#2b8a2b" stroke="#0c0c0c" stroke-width=".7"/><path d="M1123.1 221.6L1151.2 221.6L1150.3 246.0Q1136.2 249.6 1122.0 246.0Z" fill="#c80f0f" stroke="#0c0c0c" stroke-width=".7"/><path d="M1123.4 216.8L1151.4 216.8L1151.2 221.6Q1137.2 225.2 1123.1 221.6Z" fill="#2b8a2b" stroke="#0c0c0c" stroke-width=".7"/><path d="M1124.4 195.7L1152.1 195.7L1151.4 216.8Q1137.4 220.4 1123.4 216.8Z" fill="#f4f4f4" stroke="#0c0c0c" stroke-width=".7"/><path d="M1124.7 187.6L1152.4 187.6L1152.1 195.7Q1138.2 199.3 1124.4 195.7Z" fill="#0c0c0c" stroke="#0c0c0c" stroke-width=".7"/><path d="M1124.9 183.5L1152.5 183.5L1152.4 187.6Q1138.6 191.2 1124.7 187.6Z" fill="#f4f4f4" stroke="#0c0c0c" stroke-width=".7"/><ellipse cx="1138.800" cy="183.5" rx="13.800" ry="2.600" fill="#f8f8f8" stroke="#222" stroke-width=".7"/><path d="M1131 189v5" stroke="#eee" stroke-width="1"/><path d="M1135 189v5" stroke="#eee" stroke-width="1"/><path d="M1139 189v5" stroke="#eee" stroke-width="1"/><path d="M1143 189v5" stroke="#eee" stroke-width="1"/><path d="M1147 189v5" stroke="#eee" stroke-width="1"/><polyline points="1119.5,297.0 1148.6,297.0" fill="none" stroke="#0a7a1a" stroke-width="0.8"/><polyline points="1121.0,262.0 1150.0,262.0" fill="none" stroke="#b05a00" stroke-width="0.8"/><polyline points="1122.5,238.0 1150.8,238.0" fill="none" stroke="#700" stroke-width="0.8"/>
<rect x="99.500" y="914.500" width="36" height="24" fill="#8a9ab8" fill-opacity=".45" stroke="#d8d8d8" stroke-width=".9"/><path d="M119.800 941L123 872" stroke="#00e0e0" stroke-width="2.400"/><path d="M123.200 866.500l-4 10.500h8z" fill="#00e8e8"/><path d="M120 941L84 937.500" stroke="#00d000" stroke-width="2.600"/><path d="M78 937l9-4.500l-1 9.500z" fill="#00d000"/><path d="M120 941h16" stroke="#900" stroke-width="2.600"/><circle cx="135" cy="940.500" r="3.600" fill="#f00"/><circle cx="120" cy="941" r="3.800" fill="#777"/><circle cx="119" cy="940" r="1.500" fill="#aaa"/><text x="117.500" y="863.500" font-size="11" fill="#d8d8d8">Z</text><text x="68" y="941" font-size="11" fill="#f00000">Y</text><text x="139.500" y="944" font-size="11" fill="#f00000">X</text>
</svg>
</div>
<div class="vb" style="left:64px;top:113px"><svg width="24" height="24" viewBox="0 0 24 24" style="left:0;top:0"><path d="M3 6h18M3 12h18M3 18h18" stroke="#3a4e7c" stroke-width="3.400"/></svg></div><div class="vb" style="left:92px;top:113px"><svg width="24" height="24" viewBox="0 0 24 24" style="left:0;top:0"><g transform="translate(1,1)"><rect x="4" y="5" width="14" height="12" fill="#dfe8f8" stroke="#222" stroke-width="1.4"/><rect x="1" y="2" width="4" height="4" fill="#30b030"/><rect x="17" y="2" width="4" height="4" fill="#30b030"/><rect x="1" y="16" width="4" height="4" fill="#30b030"/><rect x="17" y="16" width="4" height="4" fill="#30b030"/></g></svg></div><div class="vb" style="left:120px;top:113px"><svg width="24" height="24" viewBox="0 0 24 24" style="left:0;top:0"><g transform="translate(2,2)"><circle cx="10" cy="9" r="5.6" fill="#cfe0f8" fill-opacity=".75" stroke="#9aa2b0" stroke-width="1.6"/><circle cx="8.500" cy="7.500" r="2" fill="#fff" fill-opacity=".6"/><path d="M6 13.500l-4 5" stroke="#b4b8c0" stroke-width="2.800" stroke-linecap="round"/></g></svg></div><div class="vb" style="left:148px;top:113px"><svg width="24" height="24" viewBox="0 0 24 24" style="left:0;top:0"><g transform="translate(2,1)"><path d="M2 13l9-5l10 5l-9 6z" fill="#e6ecf6" stroke="#889" stroke-width=".6"/><path d="M8 14V2" stroke="#2060e0" stroke-width="1.8"/><path d="M8 0l-3 4h6z" fill="#2060e0"/><path d="M8 14l9-6" stroke="#30b030" stroke-width="1.8"/><path d="M19 6l-5 1l3 3z" fill="#30b030"/><path d="M8 14l10 5" stroke="#e02020" stroke-width="1.8"/><path d="M20 20l-5-.5l2-3.5z" fill="#e02020"/><circle cx="8" cy="14" r="1.8" fill="#ddd" stroke="#555" stroke-width=".5"/></g></svg></div><div class="vb" style="left:176px;top:113px"><svg width="24" height="24" viewBox="0 0 24 24" style="left:0;top:0"><path d="M12 3l8 3.500l-8 3.500l-8-3.500z" fill="#2fd02f"/><path d="M12 3l8 3.500v10.500l-8 3.500l-8-3.500v-10.500zM4 6.500l8 3.500l8-3.500M12 10v10.500M12 3v10l8 4M12 13l-8 4" fill="none" stroke="#0a0a0a" stroke-width="1.100"/></svg></div><div class="vb" style="left:204px;top:113px"><svg width="24" height="24" viewBox="0 0 24 24" style="left:0;top:0"><path d="M12 13l8 4l-8 3.500l-8-3.500z" fill="#2fd02f"/><path d="M12 3l8 3.500v10.500l-8 3.500l-8-3.500v-10.500zM4 6.500l8 3.500l8-3.500M12 10v10.500M12 3v10l8 4M12 13l-8 4" fill="none" stroke="#0a0a0a" stroke-width="1.100"/></svg></div><div class="vb" style="left:232px;top:113px"><svg width="24" height="24" viewBox="0 0 24 24" style="left:0;top:0"><path d="M4 6.500l8-3.500v10l-8 4z" fill="#2fd02f"/><path d="M12 3l8 3.500v10.500l-8 3.500l-8-3.500v-10.500zM4 6.500l8 3.500l8-3.500M12 10v10.500M12 3v10l8 4M12 13l-8 4" fill="none" stroke="#0a0a0a" stroke-width="1.100"/></svg></div><div class="vb" style="left:260px;top:113px"><svg width="24" height="24" viewBox="0 0 24 24" style="left:0;top:0"><path d="M20 6.500l-8 3.500v10.500l8-3.500z" fill="#2fd02f"/><path d="M12 3l8 3.500v10.500l-8 3.500l-8-3.500v-10.500zM4 6.500l8 3.500l8-3.500M12 10v10.500M12 3v10l8 4M12 13l-8 4" fill="none" stroke="#0a0a0a" stroke-width="1.100"/></svg></div><div class="vb" style="left:288px;top:113px"><svg width="24" height="24" viewBox="0 0 24 24" style="left:0;top:0"><path d="M4 6.500l8 3.500v10.500l-8-3.500z" fill="#2fd02f"/><path d="M12 3l8 3.500v10.500l-8 3.500l-8-3.500v-10.500zM4 6.500l8 3.500l8-3.500M12 10v10.500M12 3v10l8 4M12 13l-8 4" fill="none" stroke="#0a0a0a" stroke-width="1.100"/></svg></div><div class="vb" style="left:316px;top:113px"><svg width="24" height="24" viewBox="0 0 24 24" style="left:0;top:0"><path d="M20 6.500l-8-3.500v10l8 4z" fill="#2fd02f"/><path d="M12 3l8 3.500v10.500l-8 3.500l-8-3.500v-10.500zM4 6.500l8 3.500l8-3.500M12 10v10.500M12 3v10l8 4M12 13l-8 4" fill="none" stroke="#0a0a0a" stroke-width="1.100"/></svg></div><div class="vb" style="left:344px;top:113px"><svg width="24" height="24" viewBox="0 0 24 24" style="left:0;top:0"><path d="M12 3l8 3.500l-8 3.500l-8-3.500z" fill="#6af06a"/><path d="M4 6.500l8 3.500v10.500l-8-3.500z" fill="#2fd02f"/><path d="M20 6.500l-8 3.500v10.500l8-3.500z" fill="#1a9a1a"/><path d="M12 3l8 3.500v10.500l-8 3.500l-8-3.500v-10.500zM4 6.500l8 3.500l8-3.500M12 10v10.500" fill="none" stroke="#0a5a0a" stroke-width=".8"/></svg></div><div class="vb" style="left:64px;top:141px"><svg width="22" height="22" viewBox="0 0 22 22" style="left:1px;top:1px"><path d="M6 5v12a5 2.4 0 0 0 10 0V5" fill="none" stroke="#0a0a0a" stroke-width="1.1"/><ellipse cx="11" cy="5" rx="5" ry="2.4" fill="none" stroke="#0a0a0a" stroke-width="1.1"/><path d="M6 17a5 2.4 0 0 1 10 0" fill="none" stroke="#333" stroke-width="0.8"/></svg></div><div class="vb" style="left:64px;top:169px"><svg width="22" height="22" viewBox="0 0 22 22" style="left:1px;top:1px"><path d="M6 5v12a5 2.4 0 0 0 10 0V5" fill="none" stroke="#0a0a0a" stroke-width="1.1"/><ellipse cx="11" cy="5" rx="5" ry="2.4" fill="none" stroke="#0a0a0a" stroke-width="1.1"/></svg></div><div class="vb" style="left:64px;top:197px;border:1px solid #e8c860;background:#8a8c8c"><svg width="22" height="22" viewBox="0 0 22 22" style="left:0px;top:0px"><path d="M6 5v12a5 2.4 0 0 0 10 0V5" fill="#3a6ab8" stroke="#0a0a0a" stroke-width="1.1"/><ellipse cx="11" cy="5" rx="5" ry="2.4" fill="#8ab0f0" stroke="#0a0a0a" stroke-width="1.1"/></svg></div><div class="vb" style="left:64px;top:225px"><svg width="22" height="22" viewBox="0 0 22 22" style="left:1px;top:1px"><path d="M6 5v12a5 2.4 0 0 0 10 0V5" fill="#dfe8f6" stroke="#223" stroke-width="1.1"/><ellipse cx="11" cy="5" rx="5" ry="2.4" fill="#f0f4fc" stroke="#223" stroke-width="1.1"/></svg></div><div class="vb" style="left:64px;top:253px"><svg width="22" height="22" viewBox="0 0 22 22" style="left:1px;top:1px"><path d="M6 5v12a5 2.4 0 0 0 10 0V5" fill="none" stroke="#0a0a0a" stroke-width="1.1"/><ellipse cx="11" cy="5" rx="5" ry="2.4" fill="none" stroke="#0a0a0a" stroke-width="1.1"/><path d="M7 6l3 12l3-12l2 12M15 6l-4 12l-3-12" fill="none" stroke="#111" stroke-width=".8"/></svg></div>
<div id="status" class="abs"><div class="abs" style="left:0;top:19px;width:1920px;height:1px;background:#9aa0ae"></div><span style="left:1486px;top:4px;color:#333;font-size:12.500px">绝对 XY 上视图</span><span style="left:1600px;top:4.500px;letter-spacing:.3px">绝对视图</span><span style="left:1668px;top:4px;font-weight:bold;font-size:12.500px">LAYER0</span><div class="abs" style="left:1658px;top:3px;width:2px;height:14px;background-image:repeating-linear-gradient(#9aa1b4 0 1px,transparent 1px 2px)"></div><div class="abs" style="left:1660px;top:3px;width:2px;height:14px;background-image:repeating-linear-gradient(#9aa1b4 0 1px,transparent 1px 2px)"></div><div class="abs" style="left:1762px;top:4px;width:32px;height:12px;background:#4c6186"></div><div class="abs" style="left:1805px;top:4px;width:32px;height:12px;background:#4c6186"></div><div class="abs" style="left:1848px;top:4px;width:32px;height:12px;background:#4c6186"></div><div class="abs" style="left:1592px;top:2px;width:1px;height:16px;background:#a4aaba"></div><div class="abs" style="left:1726px;top:2px;width:1px;height:16px;background:#a4aaba"></div><div class="abs" style="left:1757px;top:2px;width:1px;height:16px;background:#a4aaba"></div><div class="abs" style="left:1800px;top:2px;width:1px;height:16px;background:#a4aaba"></div><div class="abs" style="left:1843px;top:2px;width:1px;height:16px;background:#a4aaba"></div><div class="abs" style="left:1886px;top:2px;width:1px;height:16px;background:#a4aaba"></div><svg style="left:1892px;top:2px" width="16" height="16" viewBox="0 0 16 16"><circle cx="8" cy="8" r="7" fill="#2a50c0" stroke="#113"/><path d="M4 4q3-2 5 0q1 3-2 4q-3 1-3-4zM9 9q3-1 4 1q-1 3-3 3z" fill="#30b030"/></svg><span style="left:1141px;top:24px">拴牢</span><span style="left:1589px;top:24px">单位: 毫米</span><span style="left:1663px;top:23px;font-size:12.850px">X = 8341.013 Y = 4893.888 Z = 0000.000</span><div class="abs" style="left:1133px;top:23px;width:1px;height:14px;background:#a4aaba"></div><div class="abs" style="left:1175px;top:23px;width:1px;height:14px;background:#a4aaba"></div><div class="abs" style="left:1207px;top:23px;width:1px;height:14px;background:#a4aaba"></div><div class="abs" style="left:1238px;top:23px;width:1px;height:14px;background:#a4aaba"></div><div class="abs" style="left:1270px;top:23px;width:1px;height:14px;background:#a4aaba"></div><div class="abs" style="left:1301px;top:23px;width:1px;height:14px;background:#a4aaba"></div><div class="abs" style="left:1333px;top:23px;width:1px;height:14px;background:#a4aaba"></div><div class="abs" style="left:1580px;top:23px;width:1px;height:14px;background:#a4aaba"></div><div class="abs" style="left:1654px;top:23px;width:1px;height:14px;background:#a4aaba"></div><svg style="left:1181.0px;top:21.0px" width="18" height="18" viewBox="0 0 22 22"><rect x="1" y="1" width="20" height="20" fill="#e8a0a8" stroke="#a04050"/><g transform="translate(3,3) scale(.75)"><path d="M4 13a7 6 0 0 1 13-3l2-2v7h-7l2.5-2.5a4 3.4 0 0 0-7 0z" fill="#d03040" stroke="#801020" stroke-width=".6"/><path d="M18 13a7 6 0 0 1-13 3l-2 2v-7h7l-2.5 2.5a4 3.4 0 0 0 7 0z" fill="#d03040" stroke="#801020" stroke-width=".6" transform="translate(0,2)"/></g></svg><svg style="left:1212.0px;top:21.0px" width="18" height="18" viewBox="0 0 22 22"><rect x="0" y="0" width="22" height="22" fill="#f0d050"/><path d="M4 3l10 14l2-5l5 9" fill="none" stroke="#a040a0" stroke-width="2"/></svg><svg style="left:1244.0px;top:21.0px" width="18" height="18" viewBox="0 0 22 22"><path d="M3 10l8-6l8 6v10h-16z" fill="#dfe4f0" stroke="#456"/><path d="M8 6l10-4l3 4l-8 6z" fill="#e8b070" stroke="#8a5a20" stroke-width=".6"/></svg><svg style="left:1275.0px;top:21.0px" width="18" height="18" viewBox="0 0 22 22"><text x="11" y="19" font-size="22" font-weight="bold" text-anchor="middle" fill="#2a60c8" font-family="Liberation Sans,sans-serif">?</text></svg><svg style="left:1306.0px;top:21.0px" width="18" height="18" viewBox="0 0 22 22"><g transform="translate(8,6) scale(0.6)"><path d="M11 2l9 4l-9 4l-9-4z" fill="#b8bcc4" stroke="#333" stroke-width=".7"/><path d="M2 6l9 4v10l-9-4z" fill="#8e939c" stroke="#333" stroke-width=".7"/><path d="M20 6l-9 4v10l9-4z" fill="#6d727b" stroke="#333" stroke-width=".7"/></g><g transform="translate(2,8) scale(0.6)"><path d="M11 2l9 4l-9 4l-9-4z" fill="#6ab0e8" stroke="#333" stroke-width=".7"/><path d="M2 6l9 4v10l-9-4z" fill="#3a80c8" stroke="#333" stroke-width=".7"/><path d="M20 6l-9 4v10l9-4z" fill="#2a60a8" stroke="#333" stroke-width=".7"/></g><path d="M1 8l8 4M1 14l8-2" stroke="#e02020" stroke-width="1.600"/></svg><svg style="left:1338.0px;top:21.0px" width="18" height="18" viewBox="0 0 22 22"><rect x="0" y="0" width="22" height="22" fill="#f0d050"/><g transform="translate(2,2) scale(0.8)"><path d="M11 2l9 4l-9 4l-9-4z" fill="#e050e0" stroke="#333" stroke-width=".7"/><path d="M2 6l9 4v10l-9-4z" fill="#50a0e0" stroke="#333" stroke-width=".7"/><path d="M20 6l-9 4v10l9-4z" fill="#3070c0" stroke="#333" stroke-width=".7"/></g></svg><div class="abs" style="left:1341px;top:2px;width:132px;height:17px;background:#fff"></div><div class="abs" style="left:1337px;top:3px;width:1px;height:15px;background-image:repeating-linear-gradient(#9aa1b4 0 1px,transparent 1px 2px)"></div><div class="abs" style="left:1339px;top:3px;width:1px;height:15px;background-image:repeating-linear-gradient(#9aa1b4 0 1px,transparent 1px 2px)"></div><div class="abs" style="left:1474px;top:3px;width:1px;height:15px;background-image:repeating-linear-gradient(#9aa1b4 0 1px,transparent 1px 2px)"></div><div class="abs" style="left:1476px;top:3px;width:1px;height:15px;background-image:repeating-linear-gradient(#9aa1b4 0 1px,transparent 1px 2px)"></div><svg style="left:1459px;top:5px" width="12" height="12" viewBox="0 0 12 12"><circle cx="5" cy="5" r="3.500" fill="none" stroke="#6a90c8" stroke-width="1.300"/></svg><span style="left:1463px;top:23px;font-size:12.500px;color:#222">LS: 1.00 PS: 1.00</span><div class="abs" style="left:1361px;top:23px;width:1px;height:14px;background:#a4aaba"></div><div class="abs" style="left:1392px;top:23px;width:1px;height:14px;background:#a4aaba"></div><div class="abs" style="left:1423px;top:23px;width:1px;height:14px;background:#a4aaba"></div><div class="abs" style="left:1455px;top:23px;width:1px;height:14px;background:#a4aaba"></div><svg style="left:1368px;top:30px" width="80" height="10" viewBox="0 0 80 10"><rect x="2" y="0" width="10" height="8" fill="#eee" stroke="#556"/><circle cx="39" cy="1" r="7" fill="#fff" stroke="#30a030" stroke-width="2"/><path d="M62 0h7v8h-7zM69 0h7v8h-7z" fill="#eee" stroke="#556"/></svg><div class="abs" style="left:1374px;top:9px;width:191px;height:23px;background:#fff;border-radius:3px;box-shadow:0 0 1.500px rgba(0,0,0,.4)"></div><svg style="left:1357px;top:3px" width="32" height="32" viewBox="0 0 32 32"><rect x="3" y="4" width="26" height="25" rx="6" fill="#f0521e" transform="rotate(-9 16 16)"/><path d="M23 10.500q-7-3.500-11.500-.5q-3 3.500 2 5.500l5 1.500q3.500 1.500 1 4q-4.500 2.500-11.500-.8" fill="none" stroke="#fff" stroke-width="3.600" stroke-linecap="round" transform="rotate(-9 16 16)"/></svg><span style="left:1392px;top:10px;font-size:16px;color:#1e7ae0;font-weight:bold;line-height:20px">中</span><svg style="left:1414px;top:10px" width="152" height="22" viewBox="0 0 152 22"><g fill="none" stroke="#1e7ae0" stroke-width="1.700"><circle cx="3.500" cy="6" r="1.600" stroke-width="1.300"/><path d="M9.500 11q1.500 2-1.500 5" stroke-width="2" stroke-linecap="round"/><circle cx="30" cy="10.500" r="7.300"/><path d="M26.300 12.500q3.700 3.200 7.400 0"/><path d="M46.500 10a5.500 5.500 0 0 0 11 0M52 15.500v3.500"/></g><circle cx="27.300" cy="8.500" r="1.100" fill="#1e7ae0"/><circle cx="32.700" cy="8.500" r="1.100" fill="#1e7ae0"/><rect x="49.200" y="2" width="5.600" height="11.500" rx="2.800" fill="#1e7ae0"/><rect x="66" y="5" width="16.500" height="11.500" rx="2" fill="#1e7ae0"/><path d="M68.500 8h12M68.500 10.800h12" stroke="#fff" stroke-width="1.300" stroke-dasharray="1.800 1.200"/><path d="M70.500 13.700h8" stroke="#fff" stroke-width="1.300"/><circle cx="96" cy="6.500" r="3.400" fill="#c8ccd4"/><path d="M89.500 17q6.500-10 13 0z" fill="#c8ccd4"/><rect x="97" y="11" width="6" height="6" rx="1" fill="#c8ccd4" stroke="#fff"/><path d="M110 5.500l4.200-2.500q3 2.200 6 0l4.200 2.500l-2 4l-2.200-1v9h-6v-9l-2.200 1z" fill="#1e7ae0"/><path d="M133 3.500h5.600v5.600h-5.600zM140.400 3.500h5.600v5.600h-5.600zM133 10.900h5.600v5.600h-5.600zM140.400 10.900h5.600v5.600h-5.600z" fill="#1e7ae0"/></svg></div>
<div id="task" class="abs"><div class="abs" style="left:48px;top:0;width:344px;height:8px;background:#f2f2f2"></div><div class="abs" style="left:589px;top:0;width:45px;height:8px;background:#444"></div><div class="abs" style="left:634px;top:0;width:3px;height:8px;background:#777"></div><span class="abs" style="left:1815px;top:5px;color:#fff;font-size:12px;line-height:12px">17:23</span></div>
</body></html>
